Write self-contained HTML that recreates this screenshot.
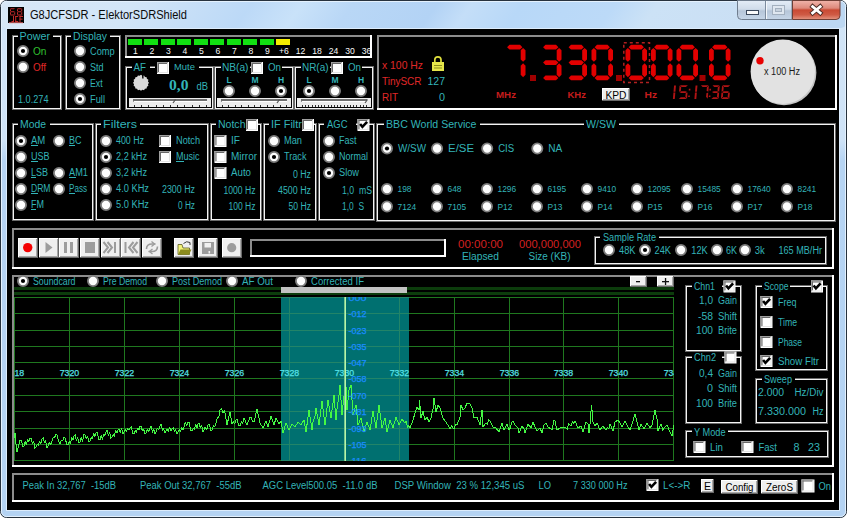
<!DOCTYPE html><html><head><meta charset="utf-8"><style>html,body{margin:0;padding:0;width:847px;height:518px;overflow:hidden;background:#fff}svg{display:block}text{font-family:"Liberation Sans",sans-serif}</style></head><body><svg width="847" height="518" viewBox="0 0 847 518" font-family="Liberation Sans">
<defs>
<linearGradient id="tb" x1="0" y1="0" x2="847" y2="0" gradientUnits="userSpaceOnUse" gradientTransform="skewX(-35)">
<stop offset="0" stop-color="#d8e8f7"/><stop offset="0.16" stop-color="#d2e5f7"/><stop offset="0.3" stop-color="#bcd9f7"/>
<stop offset="0.36" stop-color="#c9e2f9"/><stop offset="0.42" stop-color="#b9d7f6"/><stop offset="0.52" stop-color="#b3d3f5"/>
<stop offset="0.56" stop-color="#c4def8"/><stop offset="0.62" stop-color="#b8d8f8"/><stop offset="0.73" stop-color="#bcdaf8"/><stop offset="0.78" stop-color="#cce2f6"/><stop offset="0.9" stop-color="#cadff4"/><stop offset="1" stop-color="#bcd7f2"/></linearGradient>
<linearGradient id="cb" x1="0" y1="0" x2="0" y2="1"><stop offset="0" stop-color="#f0b4aa"/><stop offset="0.4" stop-color="#de8a7c"/><stop offset="0.5" stop-color="#c94a34"/><stop offset="0.75" stop-color="#cf5a44"/><stop offset="1" stop-color="#e49682"/></linearGradient>
<linearGradient id="mb" x1="0" y1="0" x2="0" y2="1"><stop offset="0" stop-color="#e4edf7"/><stop offset="0.45" stop-color="#d0dcea"/><stop offset="0.55" stop-color="#b6c6d9"/><stop offset="1" stop-color="#c6d6e8"/></linearGradient>
<linearGradient id="fr" x1="0" y1="0" x2="0" y2="518" gradientUnits="userSpaceOnUse"><stop offset="0" stop-color="#d2e5f7"/><stop offset="0.27" stop-color="#cfe3f7"/><stop offset="0.31" stop-color="#b6d4f3"/><stop offset="1" stop-color="#b4d3f3"/></linearGradient>
<clipPath id="gclip"><rect x="14" y="297" width="660" height="164"/></clipPath>
</defs>
<rect x="0.5" y="0.5" width="846" height="517" rx="6" ry="6" fill="url(#fr)" stroke="#27323e" stroke-width="1"/>
<rect x="1" y="1" width="845" height="27" rx="5" ry="5" fill="url(#tb)"/>
<rect x="1.5" y="1.5" width="844" height="515" rx="5" ry="5" fill="none" stroke="#e4f1fd" stroke-width="1"/>
<rect x="6" y="28" width="834" height="483" fill="#dcecfc" />
<rect x="7" y="29" width="832" height="481" fill="#000" />
<rect x="8" y="7" width="16" height="16" fill="#000" />
<polygon points="10.25,8.20 14.95,8.20 13.95,9.20 11.25,9.20" fill="#c42a2a"/>
<polygon points="10.00,8.45 11.00,9.45 11.00,11.05 10.00,11.55" fill="#c42a2a"/>
<polygon points="10.25,11.80 11.25,11.30 13.95,11.30 14.95,11.80 13.95,12.30 11.25,12.30" fill="#c42a2a"/>
<polygon points="10.00,12.05 11.00,12.55 11.00,14.15 10.00,15.15" fill="#c42a2a"/>
<polygon points="10.25,15.40 14.95,15.40 13.95,14.40 11.25,14.40" fill="#c42a2a"/>
<polygon points="15.20,12.05 14.20,12.55 14.20,14.15 15.20,15.15" fill="#c42a2a"/>
<polygon points="17.25,8.20 21.95,8.20 20.95,9.20 18.25,9.20" fill="#c42a2a"/>
<polygon points="22.20,8.45 21.20,9.45 21.20,11.05 22.20,11.55" fill="#c42a2a"/>
<polygon points="22.20,12.05 21.20,12.55 21.20,14.15 22.20,15.15" fill="#c42a2a"/>
<polygon points="17.25,15.40 21.95,15.40 20.95,14.40 18.25,14.40" fill="#c42a2a"/>
<polygon points="17.00,12.05 18.00,12.55 18.00,14.15 17.00,15.15" fill="#c42a2a"/>
<polygon points="17.00,8.45 18.00,9.45 18.00,11.05 17.00,11.55" fill="#c42a2a"/>
<polygon points="17.25,11.80 18.25,11.30 20.95,11.30 21.95,11.80 20.95,12.30 18.25,12.30" fill="#c42a2a"/>
<rect x="13" y="16" width="1" height="6" fill="#c42a2a" />
<rect x="11.5" y="21" width="1.5" height="1" fill="#c42a2a" />
<rect x="15.2" y="16" width="3" height="1" fill="#c42a2a" />
<rect x="15.2" y="16" width="1" height="6" fill="#c42a2a" />
<rect x="15.2" y="21" width="3" height="1" fill="#c42a2a" />
<rect x="19.5" y="16" width="3.5" height="1" fill="#c42a2a" />
<rect x="19.5" y="16" width="1" height="6" fill="#c42a2a" />
<rect x="19.5" y="18.6" width="3" height="1" fill="#c42a2a" />
<rect x="9" y="22.3" width="14" height="0.9" fill="#e86a6a" />
<text x="30" y="19" font-size="12" fill="#0a0a0a" text-anchor="start" textLength="157.00" lengthAdjust="spacingAndGlyphs" xml:space="preserve" >G8JCFSDR - ElektorSDRShield</text>
<path d="M737.5 0.5 L737.5 15.5 Q737.5 19.5 741.5 19.5 L792 19.5 L792 0.5 Z" fill="url(#mb)" stroke="#6f7d8e" stroke-width="1"/>
<rect x="765" y="1" width="1" height="18" fill="#7d8c9e" />
<rect x="766" y="1" width="1" height="18" fill="#f4f8fc" />
<path d="M792.5 0.5 L792.5 19.5 L836 19.5 Q840 19.5 840 15.5 L840 0.5 Z" fill="url(#cb)" stroke="#6e3f36" stroke-width="1"/>
<rect x="746" y="10" width="13" height="5" fill="#3a475a" />
<rect x="747" y="11" width="11" height="3" fill="#fafafa" />
<rect x="772" y="5" width="13" height="10" fill="#a3b0bf" />
<rect x="773" y="6" width="11" height="8" fill="#dfe7f0" />
<rect x="775" y="8" width="7" height="4" fill="#a3b0bf" />
<rect x="776" y="9" width="5" height="2" fill="#c7d2de" />
<path d="M812.6 6.6 L820.2 13 M820.2 6.6 L812.6 13" stroke="#4a2a24" stroke-width="4.6" stroke-linecap="square"/>
<path d="M812.6 6.6 L820.2 13 M820.2 6.6 L812.6 13" stroke="#ffffff" stroke-width="2.8" stroke-linecap="square"/>
<rect x="12" y="35" width="6" height="1" fill="#6a6a6a" />
<rect x="53" y="35" width="9" height="1" fill="#6a6a6a" />
<rect x="12" y="35" width="1" height="75" fill="#6a6a6a" />
<rect x="61" y="35" width="1" height="75" fill="#6a6a6a" />
<rect x="12" y="109" width="50" height="1" fill="#6a6a6a" />
<rect x="13" y="36" width="5" height="1" fill="#f4f4f4" />
<rect x="53" y="36" width="8" height="1" fill="#f4f4f4" />
<rect x="13" y="36" width="1" height="73" fill="#f4f4f4" />
<rect x="60" y="36" width="1" height="73" fill="#f4f4f4" />
<rect x="13" y="108" width="48" height="1" fill="#f4f4f4" />
<text x="19.5" y="40" font-size="11" fill="#33b4b8" text-anchor="start" textLength="30.50" lengthAdjust="spacingAndGlyphs" xml:space="preserve" >Power</text>
<circle cx="23" cy="51" r="5.1" fill="#fdfdfd" stroke="#7c7c7c" stroke-width="1.8"/>
<circle cx="23" cy="51" r="2.1" fill="#000"/>
<text x="33" y="55" font-size="10" fill="#30c030" text-anchor="start" textLength="13.50" lengthAdjust="spacingAndGlyphs" xml:space="preserve" >On</text>
<circle cx="23" cy="67" r="5.1" fill="#fdfdfd" stroke="#7c7c7c" stroke-width="1.8"/>
<text x="33" y="71" font-size="10" fill="#e02828" text-anchor="start" textLength="13.00" lengthAdjust="spacingAndGlyphs" xml:space="preserve" >Off</text>
<text x="18" y="103" font-size="10" fill="#33b4b8" text-anchor="start" textLength="30.50" lengthAdjust="spacingAndGlyphs" xml:space="preserve" >1.0.274</text>
<rect x="65" y="35" width="6" height="1" fill="#6a6a6a" />
<rect x="110" y="35" width="11" height="1" fill="#6a6a6a" />
<rect x="65" y="35" width="1" height="75" fill="#6a6a6a" />
<rect x="120" y="35" width="1" height="75" fill="#6a6a6a" />
<rect x="65" y="109" width="56" height="1" fill="#6a6a6a" />
<rect x="66" y="36" width="5" height="1" fill="#f4f4f4" />
<rect x="110" y="36" width="10" height="1" fill="#f4f4f4" />
<rect x="66" y="36" width="1" height="73" fill="#f4f4f4" />
<rect x="119" y="36" width="1" height="73" fill="#f4f4f4" />
<rect x="66" y="108" width="54" height="1" fill="#f4f4f4" />
<text x="73" y="40" font-size="11" fill="#33b4b8" text-anchor="start" textLength="34.00" lengthAdjust="spacingAndGlyphs" xml:space="preserve" >Display</text>
<circle cx="80" cy="51" r="5.1" fill="#fdfdfd" stroke="#7c7c7c" stroke-width="1.8"/>
<text x="90" y="55" font-size="10" fill="#33b4b8" text-anchor="start" textLength="24.70" lengthAdjust="spacingAndGlyphs" xml:space="preserve" >Comp</text>
<circle cx="80" cy="67" r="5.1" fill="#fdfdfd" stroke="#7c7c7c" stroke-width="1.8"/>
<text x="90" y="71" font-size="10" fill="#33b4b8" text-anchor="start" textLength="13.60" lengthAdjust="spacingAndGlyphs" xml:space="preserve" >Std</text>
<circle cx="80" cy="83" r="5.1" fill="#fdfdfd" stroke="#7c7c7c" stroke-width="1.8"/>
<text x="90" y="87" font-size="10" fill="#33b4b8" text-anchor="start" textLength="12.60" lengthAdjust="spacingAndGlyphs" xml:space="preserve" >Ext</text>
<circle cx="80" cy="99" r="5.1" fill="#fdfdfd" stroke="#7c7c7c" stroke-width="1.8"/>
<circle cx="80" cy="99" r="2.1" fill="#000"/>
<text x="90" y="103" font-size="10" fill="#33b4b8" text-anchor="start" textLength="15.00" lengthAdjust="spacingAndGlyphs" xml:space="preserve" >Full</text>
<rect x="125" y="35" width="247" height="2" fill="#8c8c8c" />
<rect x="125" y="35" width="2" height="23" fill="#8c8c8c" />
<rect x="125" y="56" width="247" height="2" fill="#ffffff" />
<rect x="370" y="35" width="2" height="23" fill="#ffffff" />
<rect x="128" y="39" width="14" height="6" fill="#12e012" />
<rect x="144" y="39" width="14" height="6" fill="#12e012" />
<rect x="161" y="39" width="14" height="6" fill="#12e012" />
<rect x="177" y="39" width="14" height="6" fill="#12e012" />
<rect x="194" y="39" width="14" height="6" fill="#12e012" />
<rect x="210" y="39" width="14" height="6" fill="#12e012" />
<rect x="227" y="39" width="14" height="6" fill="#12e012" />
<rect x="243" y="39" width="14" height="6" fill="#12e012" />
<rect x="260" y="39" width="14" height="6" fill="#12e012" />
<rect x="276" y="39" width="14" height="6" fill="#f4ec00" />
<text x="135.5" y="54" font-size="9.8" fill="#f8f8f8" text-anchor="middle" textLength="4.80" lengthAdjust="spacingAndGlyphs" xml:space="preserve" >1</text>
<text x="152.0" y="54" font-size="9.8" fill="#f8f8f8" text-anchor="middle" textLength="4.80" lengthAdjust="spacingAndGlyphs" xml:space="preserve" >2</text>
<text x="168.5" y="54" font-size="9.8" fill="#f8f8f8" text-anchor="middle" textLength="4.80" lengthAdjust="spacingAndGlyphs" xml:space="preserve" >3</text>
<text x="185.0" y="54" font-size="9.8" fill="#f8f8f8" text-anchor="middle" textLength="4.80" lengthAdjust="spacingAndGlyphs" xml:space="preserve" >4</text>
<text x="201.5" y="54" font-size="9.8" fill="#f8f8f8" text-anchor="middle" textLength="4.80" lengthAdjust="spacingAndGlyphs" xml:space="preserve" >5</text>
<text x="218.0" y="54" font-size="9.8" fill="#f8f8f8" text-anchor="middle" textLength="4.80" lengthAdjust="spacingAndGlyphs" xml:space="preserve" >6</text>
<text x="234.5" y="54" font-size="9.8" fill="#f8f8f8" text-anchor="middle" textLength="4.80" lengthAdjust="spacingAndGlyphs" xml:space="preserve" >7</text>
<text x="251.0" y="54" font-size="9.8" fill="#f8f8f8" text-anchor="middle" textLength="4.80" lengthAdjust="spacingAndGlyphs" xml:space="preserve" >8</text>
<text x="267.5" y="54" font-size="9.8" fill="#f8f8f8" text-anchor="middle" textLength="4.80" lengthAdjust="spacingAndGlyphs" xml:space="preserve" >9</text>
<text x="284.0" y="54" font-size="9.8" fill="#f8f8f8" text-anchor="middle" textLength="9.83" lengthAdjust="spacingAndGlyphs" xml:space="preserve" >+6</text>
<text x="300.5" y="54" font-size="9.8" fill="#f8f8f8" text-anchor="middle" textLength="9.59" lengthAdjust="spacingAndGlyphs" xml:space="preserve" >12</text>
<text x="317.0" y="54" font-size="9.8" fill="#f8f8f8" text-anchor="middle" textLength="9.59" lengthAdjust="spacingAndGlyphs" xml:space="preserve" >18</text>
<text x="333.5" y="54" font-size="9.8" fill="#f8f8f8" text-anchor="middle" textLength="9.59" lengthAdjust="spacingAndGlyphs" xml:space="preserve" >24</text>
<text x="350.0" y="54" font-size="9.8" fill="#f8f8f8" text-anchor="middle" textLength="9.59" lengthAdjust="spacingAndGlyphs" xml:space="preserve" >30</text>
<text x="366.5" y="54" font-size="9.8" fill="#f8f8f8" text-anchor="middle" textLength="9.59" lengthAdjust="spacingAndGlyphs" xml:space="preserve" >36</text>
<rect x="125" y="66" width="7" height="1" fill="#6a6a6a" />
<rect x="150" y="66" width="5" height="1" fill="#6a6a6a" />
<rect x="199" y="66" width="15" height="1" fill="#6a6a6a" />
<rect x="125" y="66" width="1" height="44" fill="#6a6a6a" />
<rect x="213" y="66" width="1" height="44" fill="#6a6a6a" />
<rect x="125" y="109" width="89" height="1" fill="#6a6a6a" />
<rect x="126" y="67" width="6" height="1" fill="#f4f4f4" />
<rect x="150" y="67" width="5" height="1" fill="#f4f4f4" />
<rect x="199" y="67" width="14" height="1" fill="#f4f4f4" />
<rect x="126" y="67" width="1" height="42" fill="#f4f4f4" />
<rect x="212" y="67" width="1" height="42" fill="#f4f4f4" />
<rect x="126" y="108" width="87" height="1" fill="#f4f4f4" />
<text x="133.5" y="70.5" font-size="11" fill="#33b4b8" text-anchor="start" textLength="12.50" lengthAdjust="spacingAndGlyphs" xml:space="preserve" >AF</text>
<rect x="157" y="62" width="12" height="12" fill="#ffffff" />
<rect x="157" y="62" width="11" height="1" fill="#a0a0a0" />
<rect x="157" y="62" width="1" height="11" fill="#a0a0a0" />
<rect x="158" y="63" width="9" height="1" fill="#696969" />
<rect x="158" y="63" width="1" height="9" fill="#696969" />
<rect x="158" y="72" width="10" height="1" fill="#e3e3e3" />
<rect x="167" y="63" width="1" height="10" fill="#e3e3e3" />
<text x="174" y="70.3" font-size="9.5" fill="#33b4b8" text-anchor="start" textLength="21.00" lengthAdjust="spacingAndGlyphs" xml:space="preserve" >Mute</text>
<polygon points="149.00,82.80 147.96,84.19 148.39,85.86 146.90,86.74 146.66,88.46 144.94,88.70 144.06,90.19 142.39,89.76 141.00,90.80 139.61,89.76 137.94,90.19 137.06,88.70 135.34,88.46 135.10,86.74 133.61,85.86 134.04,84.19 133.00,82.80 134.04,81.41 133.61,79.74 135.10,78.86 135.34,77.14 137.06,76.90 137.94,75.41 139.61,75.84 141.00,74.80 142.39,75.84 144.06,75.41 144.94,76.90 146.66,77.14 146.90,78.86 148.39,79.74 147.96,81.41" fill="#d9d9d9"/>
<path d="M142 74.5 L142.2 78.5 L143.6 78.5 L143.4 74.5 Z" fill="#000"/>
<text x="169" y="90" font-size="14" fill="#33b4b8" text-anchor="start" font-weight="bold" style="font-family:&quot;Liberation Serif&quot;" textLength="19.50" lengthAdjust="spacingAndGlyphs" xml:space="preserve" >0,0</text>
<text x="196.5" y="89.8" font-size="11.5" fill="#33b4b8" text-anchor="start" textLength="11.50" lengthAdjust="spacingAndGlyphs" xml:space="preserve" >dB</text>
<rect x="129" y="98" width="82" height="9" fill="#ececec" />
<rect x="133" y="99" width="74" height="2" fill="#6e6e6e" />
<rect x="134" y="101" width="73" height="1" fill="#ffffff" />
<rect x="133" y="101" width="1" height="1" fill="#9a9a9a" />
<rect x="134" y="105" width="1" height="2" fill="#303030" />
<rect x="141" y="105" width="1" height="2" fill="#303030" />
<rect x="148" y="105" width="1" height="2" fill="#303030" />
<rect x="156" y="105" width="1" height="2" fill="#303030" />
<rect x="163" y="105" width="1" height="2" fill="#303030" />
<rect x="170" y="105" width="1" height="2" fill="#303030" />
<rect x="177" y="105" width="1" height="2" fill="#303030" />
<rect x="184" y="105" width="1" height="2" fill="#303030" />
<rect x="192" y="105" width="1" height="2" fill="#303030" />
<rect x="199" y="105" width="1" height="2" fill="#303030" />
<rect x="206" y="105" width="1" height="2" fill="#303030" />
<path d="M173 103 L175.5 99.5" stroke="#505050" stroke-width="1.2"/>
<rect x="214" y="66" width="7" height="1" fill="#6a6a6a" />
<rect x="250" y="66" width="1" height="1" fill="#6a6a6a" />
<rect x="282" y="66" width="12" height="1" fill="#6a6a6a" />
<rect x="214" y="66" width="1" height="44" fill="#6a6a6a" />
<rect x="293" y="66" width="1" height="44" fill="#6a6a6a" />
<rect x="214" y="109" width="80" height="1" fill="#6a6a6a" />
<rect x="215" y="67" width="6" height="1" fill="#f4f4f4" />
<rect x="250" y="67" width="1" height="1" fill="#f4f4f4" />
<rect x="282" y="67" width="11" height="1" fill="#f4f4f4" />
<rect x="215" y="67" width="1" height="42" fill="#f4f4f4" />
<rect x="292" y="67" width="1" height="42" fill="#f4f4f4" />
<rect x="215" y="108" width="78" height="1" fill="#f4f4f4" />
<text x="222" y="70.5" font-size="11" fill="#33b4b8" text-anchor="start" textLength="26.50" lengthAdjust="spacingAndGlyphs" xml:space="preserve" >NB(a)</text>
<rect x="251" y="62" width="12" height="12" fill="#ffffff" />
<rect x="251" y="62" width="11" height="1" fill="#a0a0a0" />
<rect x="251" y="62" width="1" height="11" fill="#a0a0a0" />
<rect x="252" y="63" width="9" height="1" fill="#696969" />
<rect x="252" y="63" width="1" height="9" fill="#696969" />
<rect x="252" y="72" width="10" height="1" fill="#e3e3e3" />
<rect x="261" y="63" width="1" height="10" fill="#e3e3e3" />
<text x="268" y="70.5" font-size="10.5" fill="#33b4b8" text-anchor="start" textLength="13.00" lengthAdjust="spacingAndGlyphs" xml:space="preserve" >On</text>
<text x="229" y="83" font-size="9.5" fill="#33b4b8" text-anchor="middle" font-weight="bold" textLength="5.22" lengthAdjust="spacingAndGlyphs" xml:space="preserve" >L</text>
<circle cx="229" cy="91" r="5.1" fill="#fdfdfd" stroke="#7c7c7c" stroke-width="1.8"/>
<text x="255" y="83" font-size="9.5" fill="#33b4b8" text-anchor="middle" font-weight="bold" textLength="7.12" lengthAdjust="spacingAndGlyphs" xml:space="preserve" >M</text>
<circle cx="255" cy="91" r="5.1" fill="#fdfdfd" stroke="#7c7c7c" stroke-width="1.8"/>
<text x="281" y="83" font-size="9.5" fill="#33b4b8" text-anchor="middle" font-weight="bold" textLength="6.17" lengthAdjust="spacingAndGlyphs" xml:space="preserve" >H</text>
<circle cx="281" cy="91" r="5.1" fill="#fdfdfd" stroke="#7c7c7c" stroke-width="1.8"/>
<circle cx="281" cy="91" r="2.1" fill="#000"/>
<rect x="217" y="98" width="74" height="9" fill="#ececec" />
<rect x="221" y="99" width="66" height="2" fill="#6e6e6e" />
<rect x="222" y="101" width="65" height="1" fill="#ffffff" />
<rect x="221" y="101" width="1" height="1" fill="#9a9a9a" />
<rect x="222" y="105" width="1" height="2" fill="#303030" />
<rect x="228" y="105" width="1" height="2" fill="#303030" />
<rect x="235" y="105" width="1" height="2" fill="#303030" />
<rect x="241" y="105" width="1" height="2" fill="#303030" />
<rect x="248" y="105" width="1" height="2" fill="#303030" />
<rect x="254" y="105" width="1" height="2" fill="#303030" />
<rect x="260" y="105" width="1" height="2" fill="#303030" />
<rect x="267" y="105" width="1" height="2" fill="#303030" />
<rect x="273" y="105" width="1" height="2" fill="#303030" />
<rect x="280" y="105" width="1" height="2" fill="#303030" />
<rect x="286" y="105" width="1" height="2" fill="#303030" />
<path d="M277 103 L279.5 99.5" stroke="#505050" stroke-width="1.2"/>
<rect x="294" y="66" width="7" height="1" fill="#6a6a6a" />
<rect x="330" y="66" width="1" height="1" fill="#6a6a6a" />
<rect x="362" y="66" width="12" height="1" fill="#6a6a6a" />
<rect x="294" y="66" width="1" height="44" fill="#6a6a6a" />
<rect x="373" y="66" width="1" height="44" fill="#6a6a6a" />
<rect x="294" y="109" width="80" height="1" fill="#6a6a6a" />
<rect x="295" y="67" width="6" height="1" fill="#f4f4f4" />
<rect x="330" y="67" width="1" height="1" fill="#f4f4f4" />
<rect x="362" y="67" width="11" height="1" fill="#f4f4f4" />
<rect x="295" y="67" width="1" height="42" fill="#f4f4f4" />
<rect x="372" y="67" width="1" height="42" fill="#f4f4f4" />
<rect x="295" y="108" width="78" height="1" fill="#f4f4f4" />
<text x="302" y="70.5" font-size="11" fill="#33b4b8" text-anchor="start" textLength="26.50" lengthAdjust="spacingAndGlyphs" xml:space="preserve" >NR(a)</text>
<rect x="331" y="62" width="12" height="12" fill="#ffffff" />
<rect x="331" y="62" width="11" height="1" fill="#a0a0a0" />
<rect x="331" y="62" width="1" height="11" fill="#a0a0a0" />
<rect x="332" y="63" width="9" height="1" fill="#696969" />
<rect x="332" y="63" width="1" height="9" fill="#696969" />
<rect x="332" y="72" width="10" height="1" fill="#e3e3e3" />
<rect x="341" y="63" width="1" height="10" fill="#e3e3e3" />
<text x="348" y="70.5" font-size="10.5" fill="#33b4b8" text-anchor="start" textLength="13.00" lengthAdjust="spacingAndGlyphs" xml:space="preserve" >On</text>
<text x="309" y="83" font-size="9.5" fill="#33b4b8" text-anchor="middle" font-weight="bold" textLength="5.22" lengthAdjust="spacingAndGlyphs" xml:space="preserve" >L</text>
<circle cx="309" cy="91" r="5.1" fill="#fdfdfd" stroke="#7c7c7c" stroke-width="1.8"/>
<circle cx="309" cy="91" r="2.1" fill="#000"/>
<text x="335" y="83" font-size="9.5" fill="#33b4b8" text-anchor="middle" font-weight="bold" textLength="7.12" lengthAdjust="spacingAndGlyphs" xml:space="preserve" >M</text>
<circle cx="335" cy="91" r="5.1" fill="#fdfdfd" stroke="#7c7c7c" stroke-width="1.8"/>
<text x="361" y="83" font-size="9.5" fill="#33b4b8" text-anchor="middle" font-weight="bold" textLength="6.17" lengthAdjust="spacingAndGlyphs" xml:space="preserve" >H</text>
<circle cx="361" cy="91" r="5.1" fill="#fdfdfd" stroke="#7c7c7c" stroke-width="1.8"/>
<rect x="297" y="98" width="74" height="9" fill="#ececec" />
<rect x="301" y="99" width="66" height="2" fill="#6e6e6e" />
<rect x="302" y="101" width="65" height="1" fill="#ffffff" />
<rect x="301" y="101" width="1" height="1" fill="#9a9a9a" />
<rect x="302" y="105" width="1" height="2" fill="#303030" />
<rect x="305" y="105" width="1" height="2" fill="#303030" />
<rect x="308" y="105" width="1" height="2" fill="#303030" />
<rect x="312" y="105" width="1" height="2" fill="#303030" />
<rect x="315" y="105" width="1" height="2" fill="#303030" />
<rect x="318" y="105" width="1" height="2" fill="#303030" />
<rect x="321" y="105" width="1" height="2" fill="#303030" />
<rect x="324" y="105" width="1" height="2" fill="#303030" />
<rect x="328" y="105" width="1" height="2" fill="#303030" />
<rect x="331" y="105" width="1" height="2" fill="#303030" />
<rect x="334" y="105" width="1" height="2" fill="#303030" />
<rect x="337" y="105" width="1" height="2" fill="#303030" />
<rect x="340" y="105" width="1" height="2" fill="#303030" />
<rect x="344" y="105" width="1" height="2" fill="#303030" />
<rect x="347" y="105" width="1" height="2" fill="#303030" />
<rect x="350" y="105" width="1" height="2" fill="#303030" />
<rect x="353" y="105" width="1" height="2" fill="#303030" />
<rect x="356" y="105" width="1" height="2" fill="#303030" />
<rect x="360" y="105" width="1" height="2" fill="#303030" />
<rect x="363" y="105" width="1" height="2" fill="#303030" />
<rect x="366" y="105" width="1" height="2" fill="#303030" />
<path d="M365 103 L367.5 99.5" stroke="#505050" stroke-width="1.2"/>
<rect x="377" y="35" width="460" height="2" fill="#8c8c8c" />
<rect x="377" y="35" width="2" height="75" fill="#8c8c8c" />
<rect x="377" y="108" width="460" height="2" fill="#ffffff" />
<rect x="835" y="35" width="2" height="75" fill="#ffffff" />
<text x="382" y="69" font-size="11" fill="#e02828" text-anchor="start" textLength="41.00" lengthAdjust="spacingAndGlyphs" xml:space="preserve" >x 100 Hz</text>
<path d="M434.8 63 L434.8 59.8 Q434.8 56.8 437.9 56.8 Q441 56.8 441 59.8 L441 63" stroke="#dede3c" stroke-width="1.7" fill="none"/>
<rect x="432" y="62" width="12" height="9" fill="#e6e64a" />
<rect x="434" y="65" width="8" height="1" fill="#8c8c1c" />
<rect x="434" y="67.5" width="8" height="1" fill="#8c8c1c" />
<text x="382" y="85" font-size="11" fill="#e02828" text-anchor="start" textLength="39.50" lengthAdjust="spacingAndGlyphs" xml:space="preserve" >TinySCR</text>
<text x="445" y="85" font-size="11" fill="#33b4b8" text-anchor="end" textLength="17.50" lengthAdjust="spacingAndGlyphs" xml:space="preserve" >127</text>
<text x="382" y="101" font-size="11" fill="#e02828" text-anchor="start" textLength="16.00" lengthAdjust="spacingAndGlyphs" xml:space="preserve" >RIT</text>
<text x="445" y="101" font-size="11" fill="#33b4b8" text-anchor="end" textLength="6.00" lengthAdjust="spacingAndGlyphs" xml:space="preserve" >0</text>
<polygon points="507.10,47.20 509.50,44.80 520.00,44.80 522.40,47.20 520.00,49.60 509.50,49.60" fill="#e20000"/>
<polygon points="523.10,47.90 525.50,50.30 525.50,59.45 523.10,61.85 520.70,59.45 520.70,50.30" fill="#e20000"/>
<polygon points="523.10,63.25 525.50,65.65 525.50,74.80 523.10,77.20 520.70,74.80 520.70,65.65" fill="#e20000"/>
<polygon points="543.10,47.20 545.50,44.80 556.00,44.80 558.40,47.20 556.00,49.60 545.50,49.60" fill="#e20000"/>
<polygon points="559.10,47.90 561.50,50.30 561.50,59.45 559.10,61.85 556.70,59.45 556.70,50.30" fill="#e20000"/>
<polygon points="543.10,62.55 545.50,60.15 556.00,60.15 558.40,62.55 556.00,64.95 545.50,64.95" fill="#e20000"/>
<polygon points="559.10,63.25 561.50,65.65 561.50,74.80 559.10,77.20 556.70,74.80 556.70,65.65" fill="#e20000"/>
<polygon points="543.10,77.90 545.50,75.50 556.00,75.50 558.40,77.90 556.00,80.30 545.50,80.30" fill="#e20000"/>
<polygon points="568.60,47.20 571.00,44.80 581.50,44.80 583.90,47.20 581.50,49.60 571.00,49.60" fill="#e20000"/>
<polygon points="584.60,47.90 587.00,50.30 587.00,59.45 584.60,61.85 582.20,59.45 582.20,50.30" fill="#e20000"/>
<polygon points="568.60,62.55 571.00,60.15 581.50,60.15 583.90,62.55 581.50,64.95 571.00,64.95" fill="#e20000"/>
<polygon points="584.60,63.25 587.00,65.65 587.00,74.80 584.60,77.20 582.20,74.80 582.20,65.65" fill="#e20000"/>
<polygon points="568.60,77.90 571.00,75.50 581.50,75.50 583.90,77.90 581.50,80.30 571.00,80.30" fill="#e20000"/>
<polygon points="594.60,47.20 597.00,44.80 607.50,44.80 609.90,47.20 607.50,49.60 597.00,49.60" fill="#e20000"/>
<polygon points="610.60,47.90 613.00,50.30 613.00,59.45 610.60,61.85 608.20,59.45 608.20,50.30" fill="#e20000"/>
<polygon points="610.60,63.25 613.00,65.65 613.00,74.80 610.60,77.20 608.20,74.80 608.20,65.65" fill="#e20000"/>
<polygon points="594.60,77.90 597.00,75.50 607.50,75.50 609.90,77.90 607.50,80.30 597.00,80.30" fill="#e20000"/>
<polygon points="593.90,63.25 596.30,65.65 596.30,74.80 593.90,77.20 591.50,74.80 591.50,65.65" fill="#e20000"/>
<polygon points="593.90,47.90 596.30,50.30 596.30,59.45 593.90,61.85 591.50,59.45 591.50,50.30" fill="#e20000"/>
<polygon points="628.60,47.20 631.00,44.80 641.50,44.80 643.90,47.20 641.50,49.60 631.00,49.60" fill="#e20000"/>
<polygon points="644.60,47.90 647.00,50.30 647.00,59.45 644.60,61.85 642.20,59.45 642.20,50.30" fill="#e20000"/>
<polygon points="644.60,63.25 647.00,65.65 647.00,74.80 644.60,77.20 642.20,74.80 642.20,65.65" fill="#e20000"/>
<polygon points="628.60,77.90 631.00,75.50 641.50,75.50 643.90,77.90 641.50,80.30 631.00,80.30" fill="#e20000"/>
<polygon points="627.90,63.25 630.30,65.65 630.30,74.80 627.90,77.20 625.50,74.80 625.50,65.65" fill="#e20000"/>
<polygon points="627.90,47.90 630.30,50.30 630.30,59.45 627.90,61.85 625.50,59.45 625.50,50.30" fill="#e20000"/>
<polygon points="654.10,47.20 656.50,44.80 667.00,44.80 669.40,47.20 667.00,49.60 656.50,49.60" fill="#e20000"/>
<polygon points="670.10,47.90 672.50,50.30 672.50,59.45 670.10,61.85 667.70,59.45 667.70,50.30" fill="#e20000"/>
<polygon points="670.10,63.25 672.50,65.65 672.50,74.80 670.10,77.20 667.70,74.80 667.70,65.65" fill="#e20000"/>
<polygon points="654.10,77.90 656.50,75.50 667.00,75.50 669.40,77.90 667.00,80.30 656.50,80.30" fill="#e20000"/>
<polygon points="653.40,63.25 655.80,65.65 655.80,74.80 653.40,77.20 651.00,74.80 651.00,65.65" fill="#e20000"/>
<polygon points="653.40,47.90 655.80,50.30 655.80,59.45 653.40,61.85 651.00,59.45 651.00,50.30" fill="#e20000"/>
<polygon points="679.60,47.20 682.00,44.80 692.50,44.80 694.90,47.20 692.50,49.60 682.00,49.60" fill="#e20000"/>
<polygon points="695.60,47.90 698.00,50.30 698.00,59.45 695.60,61.85 693.20,59.45 693.20,50.30" fill="#e20000"/>
<polygon points="695.60,63.25 698.00,65.65 698.00,74.80 695.60,77.20 693.20,74.80 693.20,65.65" fill="#e20000"/>
<polygon points="679.60,77.90 682.00,75.50 692.50,75.50 694.90,77.90 692.50,80.30 682.00,80.30" fill="#e20000"/>
<polygon points="678.90,63.25 681.30,65.65 681.30,74.80 678.90,77.20 676.50,74.80 676.50,65.65" fill="#e20000"/>
<polygon points="678.90,47.90 681.30,50.30 681.30,59.45 678.90,61.85 676.50,59.45 676.50,50.30" fill="#e20000"/>
<polygon points="712.10,47.20 714.50,44.80 725.00,44.80 727.40,47.20 725.00,49.60 714.50,49.60" fill="#e20000"/>
<polygon points="728.10,47.90 730.50,50.30 730.50,59.45 728.10,61.85 725.70,59.45 725.70,50.30" fill="#e20000"/>
<polygon points="728.10,63.25 730.50,65.65 730.50,74.80 728.10,77.20 725.70,74.80 725.70,65.65" fill="#e20000"/>
<polygon points="712.10,77.90 714.50,75.50 725.00,75.50 727.40,77.90 725.00,80.30 714.50,80.30" fill="#e20000"/>
<polygon points="711.40,63.25 713.80,65.65 713.80,74.80 711.40,77.20 709.00,74.80 709.00,65.65" fill="#e20000"/>
<polygon points="711.40,47.90 713.80,50.30 713.80,59.45 711.40,61.85 709.00,59.45 709.00,50.30" fill="#e20000"/>
<rect x="530" y="75" width="6" height="6" fill="#a00000" />
<rect x="616" y="75" width="6" height="6" fill="#a00000" />
<rect x="699.5" y="75" width="6" height="6" fill="#a00000" />
<rect x="623.8" y="42.8" width="25.7" height="39.8" fill="none" stroke="#b02020" stroke-width="1.5" stroke-dasharray="3,3"/>
<text x="496" y="97.8" font-size="9.5" fill="#c41c1c" text-anchor="start" font-weight="bold" textLength="20.00" lengthAdjust="spacingAndGlyphs" xml:space="preserve" >MHz</text>
<text x="567.5" y="97.8" font-size="9.5" fill="#c41c1c" text-anchor="start" font-weight="bold" textLength="18.50" lengthAdjust="spacingAndGlyphs" xml:space="preserve" >KHz</text>
<text x="644.5" y="97.8" font-size="9.5" fill="#c41c1c" text-anchor="start" font-weight="bold" textLength="12.50" lengthAdjust="spacingAndGlyphs" xml:space="preserve" >Hz</text>
<rect x="602" y="88" width="28" height="13" fill="#6a6a6a" />
<rect x="602" y="88" width="27" height="12" fill="#ffffff" />
<rect x="603" y="89" width="26" height="11" fill="#a8a8a8" />
<rect x="603" y="89" width="25" height="10" fill="#efefef" />
<text x="616" y="98.5" font-size="10" fill="#000" text-anchor="middle" textLength="21.00" lengthAdjust="spacingAndGlyphs" xml:space="preserve" >KPD</text>
<g transform="translate(0,92) skewX(-5) translate(0,-92)">
<rect x="673.5" y="85.5" width="1.9" height="6.3" fill="#b01414"/>
<rect x="673.5" y="92.6" width="1.9" height="6.3" fill="#b01414"/>
<rect x="695" y="85.5" width="1.9" height="6.3" fill="#b01414"/>
<rect x="695" y="92.6" width="1.9" height="6.3" fill="#b01414"/>
<polygon points="679.35,85.20 687.25,85.20 685.45,87.00 681.15,87.00" fill="#b01414"/>
<polygon points="679.00,85.55 680.80,87.35 680.80,90.85 679.00,91.75" fill="#b01414"/>
<polygon points="679.35,92.10 681.15,91.20 685.45,91.20 687.25,92.10 685.45,93.00 681.15,93.00" fill="#b01414"/>
<polygon points="687.60,92.45 685.80,93.35 685.80,96.85 687.60,98.65" fill="#b01414"/>
<polygon points="679.35,99.00 687.25,99.00 685.45,97.20 681.15,97.20" fill="#b01414"/>
<polygon points="700.35,85.20 707.95,85.20 706.15,87.00 702.15,87.00" fill="#b01414"/>
<polygon points="708.30,85.55 706.50,87.35 706.50,90.85 708.30,91.75" fill="#b01414"/>
<polygon points="708.30,92.45 706.50,93.35 706.50,96.85 708.30,98.65" fill="#b01414"/>
<polygon points="711.95,85.20 718.85,85.20 717.05,87.00 713.75,87.00" fill="#b01414"/>
<polygon points="719.20,85.55 717.40,87.35 717.40,90.85 719.20,91.75" fill="#b01414"/>
<polygon points="711.95,92.10 713.75,91.20 717.05,91.20 718.85,92.10 717.05,93.00 713.75,93.00" fill="#b01414"/>
<polygon points="719.20,92.45 717.40,93.35 717.40,96.85 719.20,98.65" fill="#b01414"/>
<polygon points="711.95,99.00 718.85,99.00 717.05,97.20 713.75,97.20" fill="#b01414"/>
<polygon points="721.85,85.20 729.55,85.20 727.75,87.00 723.65,87.00" fill="#b01414"/>
<polygon points="721.50,85.55 723.30,87.35 723.30,90.85 721.50,91.75" fill="#b01414"/>
<polygon points="721.85,92.10 723.65,91.20 727.75,91.20 729.55,92.10 727.75,93.00 723.65,93.00" fill="#b01414"/>
<polygon points="721.50,92.45 723.30,93.35 723.30,96.85 721.50,98.65" fill="#b01414"/>
<polygon points="721.85,99.00 729.55,99.00 727.75,97.20 723.65,97.20" fill="#b01414"/>
<polygon points="729.90,92.45 728.10,93.35 728.10,96.85 729.90,98.65" fill="#b01414"/>
<rect x="688.6" y="88.8" width="1.6" height="1.6" fill="#b01414" />
<rect x="688.6" y="95.5" width="1.6" height="1.6" fill="#b01414" />
<rect x="709.2" y="88.8" width="1.6" height="1.6" fill="#b01414" />
<rect x="709.2" y="95.5" width="1.6" height="1.6" fill="#b01414" />
</g>
<circle cx="784" cy="72.8" r="32.4" fill="#c4c4c4"/>
<circle cx="782.8" cy="71.8" r="32.2" fill="#e2e2e2"/>
<circle cx="760" cy="60.7" r="3.7" fill="#e80000"/>
<text x="764" y="74.5" font-size="10" fill="#1a1a1a" text-anchor="start" textLength="36.00" lengthAdjust="spacingAndGlyphs" xml:space="preserve" >x 100 Hz</text>
<rect x="12" y="123" width="6" height="1" fill="#6a6a6a" />
<rect x="50" y="123" width="44" height="1" fill="#6a6a6a" />
<rect x="12" y="123" width="1" height="98" fill="#6a6a6a" />
<rect x="93" y="123" width="1" height="98" fill="#6a6a6a" />
<rect x="12" y="220" width="82" height="1" fill="#6a6a6a" />
<rect x="13" y="124" width="5" height="1" fill="#f4f4f4" />
<rect x="50" y="124" width="43" height="1" fill="#f4f4f4" />
<rect x="13" y="124" width="1" height="96" fill="#f4f4f4" />
<rect x="92" y="124" width="1" height="96" fill="#f4f4f4" />
<rect x="13" y="219" width="80" height="1" fill="#f4f4f4" />
<text x="20" y="128" font-size="11" fill="#33b4b8" text-anchor="start" textLength="26.00" lengthAdjust="spacingAndGlyphs" xml:space="preserve" >Mode</text>
<circle cx="21" cy="141" r="5.1" fill="#fdfdfd" stroke="#7c7c7c" stroke-width="1.8"/>
<circle cx="21" cy="141" r="2.1" fill="#000"/>
<text x="31" y="144" font-size="10" fill="#33b4b8" text-anchor="start" textLength="14.30" lengthAdjust="spacingAndGlyphs" xml:space="preserve" >AM</text>
<rect x="31" y="145" width="7" height="1" fill="#33b4b8" />
<circle cx="21" cy="157" r="5.1" fill="#fdfdfd" stroke="#7c7c7c" stroke-width="1.8"/>
<text x="31" y="160" font-size="10" fill="#33b4b8" text-anchor="start" textLength="18.60" lengthAdjust="spacingAndGlyphs" xml:space="preserve" >USB</text>
<rect x="31" y="161" width="7" height="1" fill="#33b4b8" />
<circle cx="21" cy="173" r="5.1" fill="#fdfdfd" stroke="#7c7c7c" stroke-width="1.8"/>
<text x="31" y="176" font-size="10" fill="#33b4b8" text-anchor="start" textLength="17.00" lengthAdjust="spacingAndGlyphs" xml:space="preserve" >LSB</text>
<rect x="31" y="177" width="5" height="1" fill="#33b4b8" />
<circle cx="21" cy="189" r="5.1" fill="#fdfdfd" stroke="#7c7c7c" stroke-width="1.8"/>
<text x="31" y="192" font-size="10" fill="#33b4b8" text-anchor="start" textLength="19.50" lengthAdjust="spacingAndGlyphs" xml:space="preserve" >DRM</text>
<rect x="31" y="193" width="7" height="1" fill="#33b4b8" />
<circle cx="21" cy="205" r="5.1" fill="#fdfdfd" stroke="#7c7c7c" stroke-width="1.8"/>
<text x="31" y="208" font-size="10" fill="#33b4b8" text-anchor="start" textLength="13.00" lengthAdjust="spacingAndGlyphs" xml:space="preserve" >FM</text>
<rect x="31" y="209" width="5" height="1" fill="#33b4b8" />
<circle cx="59" cy="141" r="5.1" fill="#fdfdfd" stroke="#7c7c7c" stroke-width="1.8"/>
<text x="69" y="144" font-size="10" fill="#33b4b8" text-anchor="start" textLength="12.50" lengthAdjust="spacingAndGlyphs" xml:space="preserve" >BC</text>
<rect x="69" y="145" width="6" height="1" fill="#33b4b8" />
<circle cx="59" cy="173" r="5.1" fill="#fdfdfd" stroke="#7c7c7c" stroke-width="1.8"/>
<text x="69" y="176" font-size="10" fill="#33b4b8" text-anchor="start" textLength="19.00" lengthAdjust="spacingAndGlyphs" xml:space="preserve" >AM1</text>
<rect x="69" y="177" width="7" height="1" fill="#33b4b8" />
<circle cx="59" cy="189" r="5.1" fill="#fdfdfd" stroke="#7c7c7c" stroke-width="1.8"/>
<text x="69" y="192" font-size="10" fill="#33b4b8" text-anchor="start" textLength="18.00" lengthAdjust="spacingAndGlyphs" xml:space="preserve" >Pass</text>
<rect x="69" y="193" width="6" height="1" fill="#33b4b8" />
<rect x="95" y="123" width="6" height="1" fill="#6a6a6a" />
<rect x="140" y="123" width="69" height="1" fill="#6a6a6a" />
<rect x="95" y="123" width="1" height="98" fill="#6a6a6a" />
<rect x="208" y="123" width="1" height="98" fill="#6a6a6a" />
<rect x="95" y="220" width="114" height="1" fill="#6a6a6a" />
<rect x="96" y="124" width="5" height="1" fill="#f4f4f4" />
<rect x="140" y="124" width="68" height="1" fill="#f4f4f4" />
<rect x="96" y="124" width="1" height="96" fill="#f4f4f4" />
<rect x="207" y="124" width="1" height="96" fill="#f4f4f4" />
<rect x="96" y="219" width="112" height="1" fill="#f4f4f4" />
<text x="103" y="128" font-size="11" fill="#33b4b8" text-anchor="start" textLength="34.00" lengthAdjust="spacingAndGlyphs" xml:space="preserve" >Filters</text>
<circle cx="106" cy="141" r="5.1" fill="#fdfdfd" stroke="#7c7c7c" stroke-width="1.8"/>
<text x="116" y="144" font-size="10" fill="#33b4b8" text-anchor="start" textLength="28.00" lengthAdjust="spacingAndGlyphs" xml:space="preserve" >400 Hz</text>
<circle cx="106" cy="157" r="5.1" fill="#fdfdfd" stroke="#7c7c7c" stroke-width="1.8"/>
<circle cx="106" cy="157" r="2.1" fill="#000"/>
<text x="116" y="160" font-size="10" fill="#33b4b8" text-anchor="start" textLength="31.00" lengthAdjust="spacingAndGlyphs" xml:space="preserve" >2,2 kHz</text>
<circle cx="106" cy="173" r="5.1" fill="#fdfdfd" stroke="#7c7c7c" stroke-width="1.8"/>
<text x="116" y="176" font-size="10" fill="#33b4b8" text-anchor="start" textLength="31.00" lengthAdjust="spacingAndGlyphs" xml:space="preserve" >3,2 kHz</text>
<circle cx="106" cy="189" r="5.1" fill="#fdfdfd" stroke="#7c7c7c" stroke-width="1.8"/>
<text x="116" y="192" font-size="10" fill="#33b4b8" text-anchor="start" textLength="33.00" lengthAdjust="spacingAndGlyphs" xml:space="preserve" >4.0 KHz</text>
<circle cx="106" cy="205" r="5.1" fill="#fdfdfd" stroke="#7c7c7c" stroke-width="1.8"/>
<text x="116" y="208" font-size="10" fill="#33b4b8" text-anchor="start" textLength="33.00" lengthAdjust="spacingAndGlyphs" xml:space="preserve" >5.0 KHz</text>
<rect x="159" y="135" width="12" height="12" fill="#ffffff" />
<rect x="159" y="135" width="11" height="1" fill="#a0a0a0" />
<rect x="159" y="135" width="1" height="11" fill="#a0a0a0" />
<rect x="160" y="136" width="9" height="1" fill="#696969" />
<rect x="160" y="136" width="1" height="9" fill="#696969" />
<rect x="160" y="145" width="10" height="1" fill="#e3e3e3" />
<rect x="169" y="136" width="1" height="10" fill="#e3e3e3" />
<text x="176" y="144" font-size="10" fill="#33b4b8" text-anchor="start" textLength="24.00" lengthAdjust="spacingAndGlyphs" xml:space="preserve" >Notch</text>
<rect x="159" y="151" width="12" height="12" fill="#ffffff" />
<rect x="159" y="151" width="11" height="1" fill="#a0a0a0" />
<rect x="159" y="151" width="1" height="11" fill="#a0a0a0" />
<rect x="160" y="152" width="9" height="1" fill="#696969" />
<rect x="160" y="152" width="1" height="9" fill="#696969" />
<rect x="160" y="161" width="10" height="1" fill="#e3e3e3" />
<rect x="169" y="152" width="1" height="10" fill="#e3e3e3" />
<text x="176" y="160" font-size="10" fill="#33b4b8" text-anchor="start" textLength="23.50" lengthAdjust="spacingAndGlyphs" xml:space="preserve" >Music</text>
<rect x="176" y="161" width="8" height="1" fill="#33b4b8" />
<text x="195" y="193" font-size="10" fill="#33b4b8" text-anchor="end" textLength="33.00" lengthAdjust="spacingAndGlyphs" xml:space="preserve" >2300 Hz</text>
<text x="195" y="209" font-size="10" fill="#33b4b8" text-anchor="end" textLength="17.00" lengthAdjust="spacingAndGlyphs" xml:space="preserve" >0 Hz</text>
<rect x="210" y="123" width="6" height="1" fill="#6a6a6a" />
<rect x="246" y="123" width="16" height="1" fill="#6a6a6a" />
<rect x="210" y="123" width="1" height="98" fill="#6a6a6a" />
<rect x="261" y="123" width="1" height="98" fill="#6a6a6a" />
<rect x="210" y="220" width="52" height="1" fill="#6a6a6a" />
<rect x="211" y="124" width="5" height="1" fill="#f4f4f4" />
<rect x="246" y="124" width="15" height="1" fill="#f4f4f4" />
<rect x="211" y="124" width="1" height="96" fill="#f4f4f4" />
<rect x="260" y="124" width="1" height="96" fill="#f4f4f4" />
<rect x="211" y="219" width="50" height="1" fill="#f4f4f4" />
<text x="218" y="128" font-size="11" fill="#33b4b8" text-anchor="start" textLength="27.50" lengthAdjust="spacingAndGlyphs" xml:space="preserve" >Notch</text>
<rect x="246" y="119" width="12" height="12" fill="#ffffff" />
<rect x="246" y="119" width="11" height="1" fill="#a0a0a0" />
<rect x="246" y="119" width="1" height="11" fill="#a0a0a0" />
<rect x="247" y="120" width="9" height="1" fill="#696969" />
<rect x="247" y="120" width="1" height="9" fill="#696969" />
<rect x="247" y="129" width="10" height="1" fill="#e3e3e3" />
<rect x="256" y="120" width="1" height="10" fill="#e3e3e3" />
<rect x="214.5" y="135" width="12" height="12" fill="#ffffff" />
<rect x="214.5" y="135" width="11" height="1" fill="#a0a0a0" />
<rect x="214.5" y="135" width="1" height="11" fill="#a0a0a0" />
<rect x="215.5" y="136" width="9" height="1" fill="#696969" />
<rect x="215.5" y="136" width="1" height="9" fill="#696969" />
<rect x="215.5" y="145" width="10" height="1" fill="#e3e3e3" />
<rect x="224.5" y="136" width="1" height="10" fill="#e3e3e3" />
<text x="231" y="144" font-size="10" fill="#33b4b8" text-anchor="start" textLength="9.00" lengthAdjust="spacingAndGlyphs" xml:space="preserve" >IF</text>
<rect x="214.5" y="151" width="12" height="12" fill="#ffffff" />
<rect x="214.5" y="151" width="11" height="1" fill="#a0a0a0" />
<rect x="214.5" y="151" width="1" height="11" fill="#a0a0a0" />
<rect x="215.5" y="152" width="9" height="1" fill="#696969" />
<rect x="215.5" y="152" width="1" height="9" fill="#696969" />
<rect x="215.5" y="161" width="10" height="1" fill="#e3e3e3" />
<rect x="224.5" y="152" width="1" height="10" fill="#e3e3e3" />
<text x="231" y="160" font-size="10" fill="#33b4b8" text-anchor="start" textLength="26.00" lengthAdjust="spacingAndGlyphs" xml:space="preserve" >Mirror</text>
<rect x="214.5" y="167" width="12" height="12" fill="#ffffff" />
<rect x="214.5" y="167" width="11" height="1" fill="#a0a0a0" />
<rect x="214.5" y="167" width="1" height="11" fill="#a0a0a0" />
<rect x="215.5" y="168" width="9" height="1" fill="#696969" />
<rect x="215.5" y="168" width="1" height="9" fill="#696969" />
<rect x="215.5" y="177" width="10" height="1" fill="#e3e3e3" />
<rect x="224.5" y="168" width="1" height="10" fill="#e3e3e3" />
<text x="231" y="176" font-size="10" fill="#33b4b8" text-anchor="start" textLength="20.00" lengthAdjust="spacingAndGlyphs" xml:space="preserve" >Auto</text>
<text x="255.5" y="194" font-size="10" fill="#33b4b8" text-anchor="end" textLength="32.00" lengthAdjust="spacingAndGlyphs" xml:space="preserve" >1000 Hz</text>
<text x="255.5" y="210" font-size="10" fill="#33b4b8" text-anchor="end" textLength="27.00" lengthAdjust="spacingAndGlyphs" xml:space="preserve" >100 Hz</text>
<rect x="263" y="123" width="6" height="1" fill="#6a6a6a" />
<rect x="302" y="123" width="15" height="1" fill="#6a6a6a" />
<rect x="263" y="123" width="1" height="98" fill="#6a6a6a" />
<rect x="316" y="123" width="1" height="98" fill="#6a6a6a" />
<rect x="263" y="220" width="54" height="1" fill="#6a6a6a" />
<rect x="264" y="124" width="5" height="1" fill="#f4f4f4" />
<rect x="302" y="124" width="14" height="1" fill="#f4f4f4" />
<rect x="264" y="124" width="1" height="96" fill="#f4f4f4" />
<rect x="315" y="124" width="1" height="96" fill="#f4f4f4" />
<rect x="264" y="219" width="52" height="1" fill="#f4f4f4" />
<text x="271" y="128" font-size="11" fill="#33b4b8" text-anchor="start" textLength="31.00" lengthAdjust="spacingAndGlyphs" xml:space="preserve" >IF Filtr</text>
<rect x="302" y="119" width="12" height="12" fill="#ffffff" />
<rect x="302" y="119" width="11" height="1" fill="#a0a0a0" />
<rect x="302" y="119" width="1" height="11" fill="#a0a0a0" />
<rect x="303" y="120" width="9" height="1" fill="#696969" />
<rect x="303" y="120" width="1" height="9" fill="#696969" />
<rect x="303" y="129" width="10" height="1" fill="#e3e3e3" />
<rect x="312" y="120" width="1" height="10" fill="#e3e3e3" />
<circle cx="274" cy="141" r="5.1" fill="#fdfdfd" stroke="#7c7c7c" stroke-width="1.8"/>
<text x="284" y="144" font-size="10" fill="#33b4b8" text-anchor="start" textLength="18.00" lengthAdjust="spacingAndGlyphs" xml:space="preserve" >Man</text>
<circle cx="274" cy="157" r="5.1" fill="#fdfdfd" stroke="#7c7c7c" stroke-width="1.8"/>
<circle cx="274" cy="157" r="2.1" fill="#000"/>
<text x="284" y="160" font-size="10" fill="#33b4b8" text-anchor="start" textLength="22.50" lengthAdjust="spacingAndGlyphs" xml:space="preserve" >Track</text>
<text x="311" y="178" font-size="10" fill="#33b4b8" text-anchor="end" textLength="18.00" lengthAdjust="spacingAndGlyphs" xml:space="preserve" >0 Hz</text>
<text x="311" y="194" font-size="10" fill="#33b4b8" text-anchor="end" textLength="33.00" lengthAdjust="spacingAndGlyphs" xml:space="preserve" >4500 Hz</text>
<text x="311" y="210" font-size="10" fill="#33b4b8" text-anchor="end" textLength="22.50" lengthAdjust="spacingAndGlyphs" xml:space="preserve" >50 Hz</text>
<rect x="318" y="123" width="6" height="1" fill="#6a6a6a" />
<rect x="356" y="123" width="19" height="1" fill="#6a6a6a" />
<rect x="318" y="123" width="1" height="98" fill="#6a6a6a" />
<rect x="374" y="123" width="1" height="98" fill="#6a6a6a" />
<rect x="318" y="220" width="57" height="1" fill="#6a6a6a" />
<rect x="319" y="124" width="5" height="1" fill="#f4f4f4" />
<rect x="356" y="124" width="18" height="1" fill="#f4f4f4" />
<rect x="319" y="124" width="1" height="96" fill="#f4f4f4" />
<rect x="373" y="124" width="1" height="96" fill="#f4f4f4" />
<rect x="319" y="219" width="55" height="1" fill="#f4f4f4" />
<text x="327" y="128" font-size="11" fill="#33b4b8" text-anchor="start" textLength="20.50" lengthAdjust="spacingAndGlyphs" xml:space="preserve" >AGC</text>
<rect x="357.5" y="119" width="12" height="12" fill="#ffffff" />
<rect x="357.5" y="119" width="11" height="1" fill="#a0a0a0" />
<rect x="357.5" y="119" width="1" height="11" fill="#a0a0a0" />
<rect x="358.5" y="120" width="9" height="1" fill="#696969" />
<rect x="358.5" y="120" width="1" height="9" fill="#696969" />
<rect x="358.5" y="129" width="10" height="1" fill="#e3e3e3" />
<rect x="367.5" y="120" width="1" height="10" fill="#e3e3e3" />
<path d="M360.1 124 L362.4 126.8 L367.1 121.8" stroke="#000" stroke-width="2.6" fill="none"/>
<circle cx="329" cy="141" r="5.1" fill="#fdfdfd" stroke="#7c7c7c" stroke-width="1.8"/>
<text x="339" y="144" font-size="10" fill="#33b4b8" text-anchor="start" textLength="17.50" lengthAdjust="spacingAndGlyphs" xml:space="preserve" >Fast</text>
<circle cx="329" cy="157" r="5.1" fill="#fdfdfd" stroke="#7c7c7c" stroke-width="1.8"/>
<text x="339" y="160" font-size="10" fill="#33b4b8" text-anchor="start" textLength="29.00" lengthAdjust="spacingAndGlyphs" xml:space="preserve" >Normal</text>
<circle cx="329" cy="173" r="5.1" fill="#fdfdfd" stroke="#7c7c7c" stroke-width="1.8"/>
<circle cx="329" cy="173" r="2.1" fill="#000"/>
<text x="339" y="176" font-size="10" fill="#33b4b8" text-anchor="start" textLength="20.00" lengthAdjust="spacingAndGlyphs" xml:space="preserve" >Slow</text>
<text x="372" y="194" font-size="10" fill="#33b4b8" text-anchor="end" textLength="30.00" lengthAdjust="spacingAndGlyphs" xml:space="preserve" >1,0  mS</text>
<text x="364" y="210" font-size="10" fill="#33b4b8" text-anchor="end" textLength="22.00" lengthAdjust="spacingAndGlyphs" xml:space="preserve" >1,0  S</text>
<rect x="376" y="123" width="8" height="1" fill="#6a6a6a" />
<rect x="480" y="123" width="104" height="1" fill="#6a6a6a" />
<rect x="619" y="123" width="217" height="1" fill="#6a6a6a" />
<rect x="376" y="123" width="1" height="99" fill="#6a6a6a" />
<rect x="835" y="123" width="1" height="99" fill="#6a6a6a" />
<rect x="376" y="221" width="460" height="1" fill="#6a6a6a" />
<rect x="377" y="124" width="7" height="1" fill="#f4f4f4" />
<rect x="480" y="124" width="104" height="1" fill="#f4f4f4" />
<rect x="619" y="124" width="216" height="1" fill="#f4f4f4" />
<rect x="377" y="124" width="1" height="97" fill="#f4f4f4" />
<rect x="834" y="124" width="1" height="97" fill="#f4f4f4" />
<rect x="377" y="220" width="458" height="1" fill="#f4f4f4" />
<text x="386" y="128" font-size="11" fill="#33b4b8" text-anchor="start" textLength="90.50" lengthAdjust="spacingAndGlyphs" xml:space="preserve" >BBC World Service</text>
<text x="586" y="128" font-size="11" fill="#33b4b8" text-anchor="start" textLength="30.00" lengthAdjust="spacingAndGlyphs" xml:space="preserve" >W/SW</text>
<circle cx="387.0" cy="148.5" r="5.1" fill="#fdfdfd" stroke="#7c7c7c" stroke-width="1.8"/>
<circle cx="387.0" cy="148.5" r="2.1" fill="#000"/>
<text x="398.0" y="152" font-size="10" fill="#33b4b8" text-anchor="start" textLength="28.00" lengthAdjust="spacingAndGlyphs" xml:space="preserve" >W/SW</text>
<circle cx="437.1" cy="148.5" r="5.1" fill="#fdfdfd" stroke="#7c7c7c" stroke-width="1.8"/>
<text x="448.1" y="152" font-size="10" fill="#33b4b8" text-anchor="start" textLength="26.00" lengthAdjust="spacingAndGlyphs" xml:space="preserve" >E/SE</text>
<circle cx="487.2" cy="148.5" r="5.1" fill="#fdfdfd" stroke="#7c7c7c" stroke-width="1.8"/>
<text x="498.2" y="152" font-size="10" fill="#33b4b8" text-anchor="start" textLength="16.00" lengthAdjust="spacingAndGlyphs" xml:space="preserve" >CIS</text>
<circle cx="537.3" cy="148.5" r="5.1" fill="#fdfdfd" stroke="#7c7c7c" stroke-width="1.8"/>
<text x="548.3" y="152" font-size="10" fill="#33b4b8" text-anchor="start" textLength="14.00" lengthAdjust="spacingAndGlyphs" xml:space="preserve" >NA</text>
<circle cx="387" cy="189" r="5.1" fill="#fdfdfd" stroke="#7c7c7c" stroke-width="1.8"/>
<text x="397.5" y="192.3" font-size="9" fill="#33b4b8" text-anchor="start" textLength="13.97" lengthAdjust="spacingAndGlyphs" xml:space="preserve" >198</text>
<circle cx="387" cy="206.5" r="5.1" fill="#fdfdfd" stroke="#7c7c7c" stroke-width="1.8"/>
<text x="397.5" y="210" font-size="9" fill="#33b4b8" text-anchor="start" textLength="18.62" lengthAdjust="spacingAndGlyphs" xml:space="preserve" >7124</text>
<circle cx="437" cy="189" r="5.1" fill="#fdfdfd" stroke="#7c7c7c" stroke-width="1.8"/>
<text x="447.5" y="192.3" font-size="9" fill="#33b4b8" text-anchor="start" textLength="13.97" lengthAdjust="spacingAndGlyphs" xml:space="preserve" >648</text>
<circle cx="437" cy="206.5" r="5.1" fill="#fdfdfd" stroke="#7c7c7c" stroke-width="1.8"/>
<text x="447.5" y="210" font-size="9" fill="#33b4b8" text-anchor="start" textLength="18.62" lengthAdjust="spacingAndGlyphs" xml:space="preserve" >7105</text>
<circle cx="487" cy="189" r="5.1" fill="#fdfdfd" stroke="#7c7c7c" stroke-width="1.8"/>
<text x="497.5" y="192.3" font-size="9" fill="#33b4b8" text-anchor="start" textLength="18.62" lengthAdjust="spacingAndGlyphs" xml:space="preserve" >1296</text>
<circle cx="487" cy="206.5" r="5.1" fill="#fdfdfd" stroke="#7c7c7c" stroke-width="1.8"/>
<text x="497.5" y="210" font-size="9" fill="#33b4b8" text-anchor="start" textLength="14.89" lengthAdjust="spacingAndGlyphs" xml:space="preserve" >P12</text>
<circle cx="537" cy="189" r="5.1" fill="#fdfdfd" stroke="#7c7c7c" stroke-width="1.8"/>
<text x="547.5" y="192.3" font-size="9" fill="#33b4b8" text-anchor="start" textLength="18.62" lengthAdjust="spacingAndGlyphs" xml:space="preserve" >6195</text>
<circle cx="537" cy="206.5" r="5.1" fill="#fdfdfd" stroke="#7c7c7c" stroke-width="1.8"/>
<text x="547.5" y="210" font-size="9" fill="#33b4b8" text-anchor="start" textLength="14.89" lengthAdjust="spacingAndGlyphs" xml:space="preserve" >P13</text>
<circle cx="587" cy="189" r="5.1" fill="#fdfdfd" stroke="#7c7c7c" stroke-width="1.8"/>
<text x="597.5" y="192.3" font-size="9" fill="#33b4b8" text-anchor="start" textLength="18.62" lengthAdjust="spacingAndGlyphs" xml:space="preserve" >9410</text>
<circle cx="587" cy="206.5" r="5.1" fill="#fdfdfd" stroke="#7c7c7c" stroke-width="1.8"/>
<text x="597.5" y="210" font-size="9" fill="#33b4b8" text-anchor="start" textLength="14.89" lengthAdjust="spacingAndGlyphs" xml:space="preserve" >P14</text>
<circle cx="637" cy="189" r="5.1" fill="#fdfdfd" stroke="#7c7c7c" stroke-width="1.8"/>
<text x="647.5" y="192.3" font-size="9" fill="#33b4b8" text-anchor="start" textLength="23.28" lengthAdjust="spacingAndGlyphs" xml:space="preserve" >12095</text>
<circle cx="637" cy="206.5" r="5.1" fill="#fdfdfd" stroke="#7c7c7c" stroke-width="1.8"/>
<text x="647.5" y="210" font-size="9" fill="#33b4b8" text-anchor="start" textLength="14.89" lengthAdjust="spacingAndGlyphs" xml:space="preserve" >P15</text>
<circle cx="687" cy="189" r="5.1" fill="#fdfdfd" stroke="#7c7c7c" stroke-width="1.8"/>
<text x="697.5" y="192.3" font-size="9" fill="#33b4b8" text-anchor="start" textLength="23.28" lengthAdjust="spacingAndGlyphs" xml:space="preserve" >15485</text>
<circle cx="687" cy="206.5" r="5.1" fill="#fdfdfd" stroke="#7c7c7c" stroke-width="1.8"/>
<text x="697.5" y="210" font-size="9" fill="#33b4b8" text-anchor="start" textLength="14.89" lengthAdjust="spacingAndGlyphs" xml:space="preserve" >P16</text>
<circle cx="737" cy="189" r="5.1" fill="#fdfdfd" stroke="#7c7c7c" stroke-width="1.8"/>
<text x="747.5" y="192.3" font-size="9" fill="#33b4b8" text-anchor="start" textLength="23.28" lengthAdjust="spacingAndGlyphs" xml:space="preserve" >17640</text>
<circle cx="737" cy="206.5" r="5.1" fill="#fdfdfd" stroke="#7c7c7c" stroke-width="1.8"/>
<text x="747.5" y="210" font-size="9" fill="#33b4b8" text-anchor="start" textLength="14.89" lengthAdjust="spacingAndGlyphs" xml:space="preserve" >P17</text>
<circle cx="787" cy="189" r="5.1" fill="#fdfdfd" stroke="#7c7c7c" stroke-width="1.8"/>
<text x="797.5" y="192.3" font-size="9" fill="#33b4b8" text-anchor="start" textLength="18.62" lengthAdjust="spacingAndGlyphs" xml:space="preserve" >8241</text>
<circle cx="787" cy="206.5" r="5.1" fill="#fdfdfd" stroke="#7c7c7c" stroke-width="1.8"/>
<text x="797.5" y="210" font-size="9" fill="#33b4b8" text-anchor="start" textLength="14.89" lengthAdjust="spacingAndGlyphs" xml:space="preserve" >P18</text>
<rect x="12" y="228" width="822" height="2" fill="#8c8c8c" />
<rect x="12" y="228" width="2" height="41" fill="#8c8c8c" />
<rect x="12" y="267" width="822" height="2" fill="#ffffff" />
<rect x="832" y="228" width="2" height="41" fill="#ffffff" />
<rect x="18" y="238" width="20" height="20" fill="#6a6a6a" />
<rect x="18" y="238" width="19" height="19" fill="#ffffff" />
<rect x="19" y="239" width="18" height="18" fill="#a8a8a8" />
<rect x="19" y="239" width="17" height="17" fill="#efefef" />
<rect x="39" y="238" width="20" height="20" fill="#6a6a6a" />
<rect x="39" y="238" width="19" height="19" fill="#ffffff" />
<rect x="40" y="239" width="18" height="18" fill="#a8a8a8" />
<rect x="40" y="239" width="17" height="17" fill="#efefef" />
<rect x="59" y="238" width="20" height="20" fill="#6a6a6a" />
<rect x="59" y="238" width="19" height="19" fill="#ffffff" />
<rect x="60" y="239" width="18" height="18" fill="#a8a8a8" />
<rect x="60" y="239" width="17" height="17" fill="#efefef" />
<rect x="80" y="238" width="20" height="20" fill="#6a6a6a" />
<rect x="80" y="238" width="19" height="19" fill="#ffffff" />
<rect x="81" y="239" width="18" height="18" fill="#a8a8a8" />
<rect x="81" y="239" width="17" height="17" fill="#efefef" />
<rect x="101" y="238" width="20" height="20" fill="#6a6a6a" />
<rect x="101" y="238" width="19" height="19" fill="#ffffff" />
<rect x="102" y="239" width="18" height="18" fill="#a8a8a8" />
<rect x="102" y="239" width="17" height="17" fill="#efefef" />
<rect x="121" y="238" width="20" height="20" fill="#6a6a6a" />
<rect x="121" y="238" width="19" height="19" fill="#ffffff" />
<rect x="122" y="239" width="18" height="18" fill="#a8a8a8" />
<rect x="122" y="239" width="17" height="17" fill="#efefef" />
<rect x="142" y="238" width="20" height="20" fill="#6a6a6a" />
<rect x="142" y="238" width="19" height="19" fill="#ffffff" />
<rect x="143" y="239" width="18" height="18" fill="#a8a8a8" />
<rect x="143" y="239" width="17" height="17" fill="#efefef" />
<rect x="174" y="238" width="20" height="20" fill="#6a6a6a" />
<rect x="174" y="238" width="19" height="19" fill="#ffffff" />
<rect x="175" y="239" width="18" height="18" fill="#a8a8a8" />
<rect x="175" y="239" width="17" height="17" fill="#efefef" />
<rect x="198" y="238" width="20" height="20" fill="#6a6a6a" />
<rect x="198" y="238" width="19" height="19" fill="#ffffff" />
<rect x="199" y="239" width="18" height="18" fill="#a8a8a8" />
<rect x="199" y="239" width="17" height="17" fill="#efefef" />
<rect x="222" y="238" width="20" height="20" fill="#6a6a6a" />
<rect x="222" y="238" width="19" height="19" fill="#ffffff" />
<rect x="223" y="239" width="18" height="18" fill="#a8a8a8" />
<rect x="223" y="239" width="17" height="17" fill="#efefef" />
<circle cx="27.7" cy="247.6" r="4.7" fill="#f40000"/>
<path d="M45.5 242 L52.5 247.5 L45.5 253 Z" fill="#9c9c9c"/>
<rect x="64" y="242" width="3" height="11" fill="#9c9c9c" />
<rect x="70" y="242" width="3" height="11" fill="#9c9c9c" />
<rect x="85" y="242" width="10" height="11" fill="#9c9c9c" />
<path d="M103.5 242 L108 247.5 L103.5 253 M107.5 242 L112 247.5 L107.5 253" stroke="#9c9c9c" stroke-width="2" fill="none"/>
<rect x="114" y="242" width="2" height="11" fill="#9c9c9c" />
<rect x="124.5" y="242" width="2" height="11" fill="#9c9c9c" />
<path d="M133.5 242 L129 247.5 L133.5 253 M137.5 242 L133 247.5 L137.5 253" stroke="#9c9c9c" stroke-width="2" fill="none"/>
<path d="M146.5 249 Q146.5 244 152 244 L155.5 244 M157.5 246.5 Q157.5 251.5 152 251.5 L148.5 251.5" stroke="#9c9c9c" stroke-width="1.6" fill="none"/>
<path d="M151.5 241.5 L154.5 244 L151.5 246.5 M152.5 249 L149.5 251.5 L152.5 254" stroke="#9c9c9c" stroke-width="1.3" fill="none"/>
<path d="M178 244.5 L178 254.5 L189.5 254.5 L189.5 248 L183 248 L182 244.5 Z" fill="#f2f27a" stroke="#5a5a20" stroke-width="0.8"/>
<path d="M180.5 249.5 L191.5 249.5 L189 254.5 L178 254.5 Z" fill="#8c8c1e"/>
<path d="M183.5 243.5 Q186.5 240.5 190 242.5 L190 245" stroke="#3a3a3a" stroke-width="1" fill="none"/>
<rect x="202" y="242" width="12" height="12" fill="#9c9c9c" />
<rect x="204.5" y="243" width="6.5" height="4.5" fill="#f0f0f0" />
<rect x="208.5" y="251" width="1.6" height="2.5" fill="#f0f0f0" />
<circle cx="231.7" cy="247.7" r="4.6" fill="#9c9c9c"/>
<rect x="250" y="239" width="196" height="2" fill="#8c8c8c" />
<rect x="250" y="239" width="2" height="18" fill="#8c8c8c" />
<rect x="250" y="255" width="196" height="2" fill="#ffffff" />
<rect x="444" y="239" width="2" height="18" fill="#ffffff" />
<text x="458" y="248" font-size="10" fill="#d42020" text-anchor="start" textLength="45.00" lengthAdjust="spacingAndGlyphs" xml:space="preserve" >00:00:00</text>
<text x="462" y="260" font-size="10" fill="#33b4b8" text-anchor="start" textLength="37.00" lengthAdjust="spacingAndGlyphs" xml:space="preserve" >Elapsed</text>
<text x="519" y="248" font-size="10" fill="#d42020" text-anchor="start" textLength="62.00" lengthAdjust="spacingAndGlyphs" xml:space="preserve" >000,000,000</text>
<text x="528.5" y="260" font-size="10" fill="#33b4b8" text-anchor="start" textLength="42.00" lengthAdjust="spacingAndGlyphs" xml:space="preserve" >Size (KB)</text>
<rect x="594" y="236" width="6" height="1" fill="#6a6a6a" />
<rect x="659" y="236" width="168" height="1" fill="#6a6a6a" />
<rect x="594" y="236" width="1" height="29" fill="#6a6a6a" />
<rect x="826" y="236" width="1" height="29" fill="#6a6a6a" />
<rect x="594" y="264" width="233" height="1" fill="#6a6a6a" />
<rect x="595" y="237" width="5" height="1" fill="#f4f4f4" />
<rect x="659" y="237" width="167" height="1" fill="#f4f4f4" />
<rect x="595" y="237" width="1" height="27" fill="#f4f4f4" />
<rect x="825" y="237" width="1" height="27" fill="#f4f4f4" />
<rect x="595" y="263" width="231" height="1" fill="#f4f4f4" />
<text x="603" y="240.5" font-size="10" fill="#33b4b8" text-anchor="start" textLength="53.00" lengthAdjust="spacingAndGlyphs" xml:space="preserve" >Sample Rate</text>
<circle cx="609" cy="250" r="5.1" fill="#fdfdfd" stroke="#7c7c7c" stroke-width="1.8"/>
<text x="619" y="254" font-size="10" fill="#33b4b8" text-anchor="start" textLength="16.50" lengthAdjust="spacingAndGlyphs" xml:space="preserve" >48K</text>
<circle cx="645" cy="250" r="5.1" fill="#fdfdfd" stroke="#7c7c7c" stroke-width="1.8"/>
<circle cx="645" cy="250" r="2.1" fill="#000"/>
<text x="654.5" y="254" font-size="10" fill="#33b4b8" text-anchor="start" textLength="16.50" lengthAdjust="spacingAndGlyphs" xml:space="preserve" >24K</text>
<circle cx="681" cy="250" r="5.1" fill="#fdfdfd" stroke="#7c7c7c" stroke-width="1.8"/>
<text x="691.3" y="254" font-size="10" fill="#33b4b8" text-anchor="start" textLength="16.50" lengthAdjust="spacingAndGlyphs" xml:space="preserve" >12K</text>
<circle cx="717" cy="250" r="5.1" fill="#fdfdfd" stroke="#7c7c7c" stroke-width="1.8"/>
<text x="726" y="254" font-size="10" fill="#33b4b8" text-anchor="start" textLength="11.00" lengthAdjust="spacingAndGlyphs" xml:space="preserve" >6K</text>
<circle cx="745" cy="250" r="5.1" fill="#fdfdfd" stroke="#7c7c7c" stroke-width="1.8"/>
<text x="754.7" y="254" font-size="10" fill="#33b4b8" text-anchor="start" textLength="10.00" lengthAdjust="spacingAndGlyphs" xml:space="preserve" >3k</text>
<text x="778.5" y="254" font-size="10" fill="#33b4b8" text-anchor="start" textLength="43.50" lengthAdjust="spacingAndGlyphs" xml:space="preserve" >165 MB/Hr</text>
<rect x="12" y="275" width="822" height="2" fill="#8c8c8c" />
<rect x="12" y="275" width="2" height="192" fill="#8c8c8c" />
<rect x="12" y="465" width="822" height="2" fill="#ffffff" />
<rect x="832" y="275" width="2" height="192" fill="#ffffff" />
<circle cx="23" cy="281" r="5.1" fill="#fdfdfd" stroke="#7c7c7c" stroke-width="1.8"/>
<circle cx="23" cy="281" r="2.1" fill="#000"/>
<text x="33" y="285" font-size="10" fill="#33b4b8" text-anchor="start" textLength="42.50" lengthAdjust="spacingAndGlyphs" xml:space="preserve" >Soundcard</text>
<circle cx="93" cy="281" r="5.1" fill="#fdfdfd" stroke="#7c7c7c" stroke-width="1.8"/>
<text x="103" y="285" font-size="10" fill="#33b4b8" text-anchor="start" textLength="44.00" lengthAdjust="spacingAndGlyphs" xml:space="preserve" >Pre Demod</text>
<circle cx="162" cy="281" r="5.1" fill="#fdfdfd" stroke="#7c7c7c" stroke-width="1.8"/>
<text x="172" y="285" font-size="10" fill="#33b4b8" text-anchor="start" textLength="50.00" lengthAdjust="spacingAndGlyphs" xml:space="preserve" >Post Demod</text>
<circle cx="232" cy="281" r="5.1" fill="#fdfdfd" stroke="#7c7c7c" stroke-width="1.8"/>
<text x="242" y="285" font-size="10" fill="#33b4b8" text-anchor="start" textLength="31.00" lengthAdjust="spacingAndGlyphs" xml:space="preserve" >AF Out</text>
<circle cx="301" cy="281" r="5.1" fill="#fdfdfd" stroke="#7c7c7c" stroke-width="1.8"/>
<text x="311" y="285" font-size="10" fill="#33b4b8" text-anchor="start" textLength="53.00" lengthAdjust="spacingAndGlyphs" xml:space="preserve" >Corrected IF</text>
<rect x="630" y="276" width="17" height="11" fill="#6a6a6a" />
<rect x="630" y="276" width="16" height="10" fill="#ffffff" />
<rect x="631" y="277" width="15" height="9" fill="#a8a8a8" />
<rect x="631" y="277" width="14" height="8" fill="#efefef" />
<rect x="636" y="281" width="4" height="1.3" fill="#111" />
<rect x="657" y="276" width="17" height="11" fill="#6a6a6a" />
<rect x="657" y="276" width="16" height="10" fill="#ffffff" />
<rect x="658" y="277" width="15" height="9" fill="#a8a8a8" />
<rect x="658" y="277" width="14" height="8" fill="#efefef" />
<rect x="662" y="281" width="7" height="1.3" fill="#111" />
<rect x="664.9" y="278" width="1.3" height="7" fill="#111" />
<rect x="14" y="287" width="660" height="3" fill="#0c3c0c" />
<rect x="14" y="292" width="660" height="3" fill="#0c3c0c" />
<rect x="281" y="287" width="126" height="6" fill="#c2c2c2" />
<rect x="281" y="297" width="128" height="164" fill="#007070" />
<rect x="14" y="297" width="1" height="164" fill="#1f781f" />
<rect x="69" y="297" width="1" height="164" fill="#1f781f" />
<rect x="124" y="297" width="1" height="164" fill="#1f781f" />
<rect x="179" y="297" width="1" height="164" fill="#1f781f" />
<rect x="234" y="297" width="1" height="164" fill="#1f781f" />
<rect x="289" y="297" width="1" height="164" fill="#228468" />
<rect x="344" y="297" width="1" height="164" fill="#228468" />
<rect x="399" y="297" width="1" height="164" fill="#228468" />
<rect x="454" y="297" width="1" height="164" fill="#1f781f" />
<rect x="509" y="297" width="1" height="164" fill="#1f781f" />
<rect x="563" y="297" width="1" height="164" fill="#1f781f" />
<rect x="618" y="297" width="1" height="164" fill="#1f781f" />
<rect x="673" y="297" width="1" height="164" fill="#1f781f" />
<rect x="14" y="297" width="267" height="1" fill="#1f781f" />
<rect x="281" y="297" width="128" height="1" fill="#228468" />
<rect x="409" y="297" width="265" height="1" fill="#1f781f" />
<rect x="14" y="313" width="267" height="1" fill="#1f781f" />
<rect x="281" y="313" width="128" height="1" fill="#228468" />
<rect x="409" y="313" width="265" height="1" fill="#1f781f" />
<rect x="14" y="330" width="267" height="1" fill="#1f781f" />
<rect x="281" y="330" width="128" height="1" fill="#228468" />
<rect x="409" y="330" width="265" height="1" fill="#1f781f" />
<rect x="14" y="346" width="267" height="1" fill="#1f781f" />
<rect x="281" y="346" width="128" height="1" fill="#228468" />
<rect x="409" y="346" width="265" height="1" fill="#1f781f" />
<rect x="14" y="362" width="267" height="1" fill="#1f781f" />
<rect x="281" y="362" width="128" height="1" fill="#228468" />
<rect x="409" y="362" width="265" height="1" fill="#1f781f" />
<rect x="14" y="378" width="267" height="1" fill="#1f781f" />
<rect x="281" y="378" width="128" height="1" fill="#228468" />
<rect x="409" y="378" width="265" height="1" fill="#1f781f" />
<rect x="14" y="395" width="267" height="1" fill="#1f781f" />
<rect x="281" y="395" width="128" height="1" fill="#228468" />
<rect x="409" y="395" width="265" height="1" fill="#1f781f" />
<rect x="14" y="411" width="267" height="1" fill="#1f781f" />
<rect x="281" y="411" width="128" height="1" fill="#228468" />
<rect x="409" y="411" width="265" height="1" fill="#1f781f" />
<rect x="14" y="428" width="267" height="1" fill="#1f781f" />
<rect x="281" y="428" width="128" height="1" fill="#228468" />
<rect x="409" y="428" width="265" height="1" fill="#1f781f" />
<rect x="14" y="444" width="267" height="1" fill="#1f781f" />
<rect x="281" y="444" width="128" height="1" fill="#228468" />
<rect x="409" y="444" width="265" height="1" fill="#1f781f" />
<rect x="14" y="460" width="267" height="1" fill="#1f781f" />
<rect x="281" y="460" width="128" height="1" fill="#228468" />
<rect x="409" y="460" width="265" height="1" fill="#1f781f" />
<g clip-path="url(#gclip)">
<text x="14.5" y="376" font-size="9.6" fill="#56e0e6" text-anchor="middle" textLength="19.50" lengthAdjust="spacingAndGlyphs" xml:space="preserve" stroke="#56e0e6" stroke-width="0.25">7318</text>
<text x="69.5" y="376" font-size="9.6" fill="#56e0e6" text-anchor="middle" textLength="19.50" lengthAdjust="spacingAndGlyphs" xml:space="preserve" stroke="#56e0e6" stroke-width="0.25">7320</text>
<text x="124.5" y="376" font-size="9.6" fill="#56e0e6" text-anchor="middle" textLength="19.50" lengthAdjust="spacingAndGlyphs" xml:space="preserve" stroke="#56e0e6" stroke-width="0.25">7322</text>
<text x="179.5" y="376" font-size="9.6" fill="#56e0e6" text-anchor="middle" textLength="19.50" lengthAdjust="spacingAndGlyphs" xml:space="preserve" stroke="#56e0e6" stroke-width="0.25">7324</text>
<text x="234.5" y="376" font-size="9.6" fill="#56e0e6" text-anchor="middle" textLength="19.50" lengthAdjust="spacingAndGlyphs" xml:space="preserve" stroke="#56e0e6" stroke-width="0.25">7326</text>
<text x="289.5" y="376" font-size="9.6" fill="#56e0e6" text-anchor="middle" textLength="19.50" lengthAdjust="spacingAndGlyphs" xml:space="preserve" stroke="#56e0e6" stroke-width="0.25">7328</text>
<text x="344.5" y="376" font-size="9.6" fill="#56e0e6" text-anchor="middle" textLength="19.50" lengthAdjust="spacingAndGlyphs" xml:space="preserve" stroke="#56e0e6" stroke-width="0.25">7330</text>
<text x="399.5" y="376" font-size="9.6" fill="#56e0e6" text-anchor="middle" textLength="19.50" lengthAdjust="spacingAndGlyphs" xml:space="preserve" stroke="#56e0e6" stroke-width="0.25">7332</text>
<text x="454.5" y="376" font-size="9.6" fill="#56e0e6" text-anchor="middle" textLength="19.50" lengthAdjust="spacingAndGlyphs" xml:space="preserve" stroke="#56e0e6" stroke-width="0.25">7334</text>
<text x="509.5" y="376" font-size="9.6" fill="#56e0e6" text-anchor="middle" textLength="19.50" lengthAdjust="spacingAndGlyphs" xml:space="preserve" stroke="#56e0e6" stroke-width="0.25">7336</text>
<text x="563.5" y="376" font-size="9.6" fill="#56e0e6" text-anchor="middle" textLength="19.50" lengthAdjust="spacingAndGlyphs" xml:space="preserve" stroke="#56e0e6" stroke-width="0.25">7338</text>
<text x="618.5" y="376" font-size="9.6" fill="#56e0e6" text-anchor="middle" textLength="19.50" lengthAdjust="spacingAndGlyphs" xml:space="preserve" stroke="#56e0e6" stroke-width="0.25">7340</text>
<text x="673.5" y="376" font-size="9.6" fill="#56e0e6" text-anchor="middle" textLength="19.50" lengthAdjust="spacingAndGlyphs" xml:space="preserve" stroke="#56e0e6" stroke-width="0.25">7342</text>
<polyline points="14.0,438.0 15.0,433.0 16.0,444.0 17.0,452.0 20.0,440.0 21.3,440.0 22.7,446.2 24.0,446.0 25.2,441.4 26.4,444.8 27.6,439.1 28.8,441.9 30.0,438.0 31.2,438.4 32.4,443.7 33.6,441.0 34.8,447.9 36.0,447.0 37.2,444.2 38.4,445.5 39.6,441.0 40.8,443.4 42.0,439.0 43.2,437.9 44.4,442.9 45.6,440.0 46.8,447.7 48.0,446.0 49.3,441.9 50.7,445.0 52.0,441.0 53.3,437.3 54.7,437.4 56.0,434.0 57.3,435.2 58.7,441.8 60.0,444.0 61.3,440.2 62.7,440.9 64.0,437.0 65.3,438.6 66.7,444.4 68.0,445.0 69.2,441.2 70.4,444.3 71.6,437.5 72.8,440.2 74.0,436.0 75.2,435.1 76.4,440.9 77.6,437.6 78.8,442.4 80.0,442.0 81.2,437.1 82.5,441.7 83.8,433.9 85.0,435.0 86.2,439.1 87.5,436.3 88.8,441.0 90.0,441.0 91.2,437.8 92.4,439.0 93.6,433.5 94.8,436.5 96.0,433.0 97.3,432.5 98.7,439.5 100.0,440.0 101.2,435.3 102.4,439.7 103.6,434.2 104.8,435.1 106.0,432.0 107.2,430.0 108.4,436.0 109.6,431.8 110.8,437.9 112.0,437.0 113.2,434.4 114.4,436.6 115.6,430.1 116.8,433.0 118.0,430.0 119.2,429.2 120.4,432.5 121.6,428.1 122.8,434.3 124.0,432.0 125.2,429.9 126.4,431.9 127.6,428.4 128.8,429.9 130.0,428.0 131.3,427.2 132.7,433.4 134.0,434.0 135.2,430.2 136.4,432.8 137.6,427.8 138.8,430.2 140.0,426.0 141.2,426.1 142.4,431.2 143.6,428.9 144.8,433.5 146.0,433.0 147.3,429.9 148.7,431.3 150.0,428.0 151.2,425.7 152.4,432.4 153.6,428.7 154.8,434.1 156.0,432.0 157.3,428.5 158.7,429.9 160.0,426.0 161.2,424.1 162.4,430.4 163.6,427.8 164.8,433.2 166.0,431.0 167.2,429.1 168.4,431.8 169.6,427.1 170.8,431.1 172.0,429.0 173.2,427.9 174.4,431.4 175.6,429.6 176.8,433.7 178.0,432.0 179.2,429.5 180.4,432.3 181.6,427.2 182.8,430.0 184.0,427.0 185.3,422.2 186.7,425.7 188.0,422.0 189.3,422.7 190.7,430.9 192.0,431.0 193.2,428.2 194.4,429.5 195.6,423.8 196.8,428.2 198.0,424.0 199.2,423.7 200.4,427.8 201.6,425.0 202.8,431.9 204.0,430.0 205.3,426.9 206.7,429.8 208.0,425.0 209.3,423.7 210.7,430.7 212.0,430.0 213.3,425.7 214.7,426.6 216.0,423.0 217.3,417.6 218.7,417.5 220.0,410.0 221.5,408.5 223.0,412.6 224.5,410.0 227.0,425.0 230.0,412.0 232.0,424.0 233.3,421.1 234.7,424.1 236.0,420.0 237.3,419.7 238.7,425.6 240.0,426.0 241.3,421.9 242.7,423.3 244.0,418.0 247.0,425.0 250.0,417.0 251.3,417.5 252.7,421.8 254.0,422.0 257.0,409.0 260.0,423.0 263.0,428.0 266.0,421.0 268.0,427.0 271.0,416.0 274.0,425.0 276.0,418.0 279.0,424.0 281.0,421.0 283.0,433.0 286.0,423.0 289.0,430.0 292.0,424.0 295.0,427.0 298.0,422.0 301.0,425.0 304.0,420.0 306.0,432.0 309.0,410.0 312.0,430.0 313.3,420.4 314.7,418.2 316.0,408.0 319.0,425.0 322.0,401.0 325.0,425.0 328.0,400.0 331.0,418.0 334.0,395.0 336.0,420.0 337.3,406.0 338.7,398.3 340.0,385.0 342.0,415.0 344.0,396.0 345.0,363.0 347.0,410.0 349.0,390.0 351.0,385.0 353.0,415.0 356.0,405.0 358.0,425.0 361.0,418.0 364.0,432.0 367.0,422.0 370.0,430.0 373.0,411.0 376.0,428.0 379.0,405.0 382.0,428.0 385.0,418.0 387.0,432.0 390.0,420.0 393.0,428.0 396.0,417.0 399.0,425.0 402.0,419.0 405.0,423.0 406.2,421.2 407.5,426.9 408.8,425.7 410.0,428.0 413.0,420.0 415.0,413.0 417.0,407.0 419.0,410.0 419.5,400.0 421.0,418.0 423.0,411.0 425.0,420.0 427.0,417.0 429.0,422.0 431.0,418.0 433.0,409.0 434.0,398.0 436.0,412.0 438.0,405.0 440.0,408.0 443.0,418.0 446.0,422.0 449.0,427.0 450.3,428.9 451.7,425.7 453.0,428.0 454.3,428.1 455.7,424.6 457.0,425.0 460.0,417.0 461.0,405.0 463.0,410.0 465.0,408.0 467.0,403.0 470.0,404.0 472.0,408.0 474.0,418.0 477.0,417.0 480.0,425.0 482.0,410.0 483.0,427.0 486.0,423.0 487.3,424.1 488.7,419.4 490.0,421.0 493.0,427.0 496.0,428.0 499.0,432.0 502.0,423.0 504.0,430.0 507.0,424.0 509.0,430.0 510.3,428.3 511.7,422.2 513.0,421.0 515.0,425.0 518.0,428.0 519.0,433.0 522.0,426.0 524.0,429.0 525.0,433.0 528.0,424.0 531.0,428.0 533.0,422.0 535.0,427.0 537.0,431.0 540.0,428.0 542.0,433.0 544.0,425.0 546.0,423.0 548.0,427.0 551.0,429.0 552.3,429.3 553.7,420.5 555.0,421.0 557.0,430.0 560.0,428.0 563.0,427.0 566.0,428.0 567.3,429.4 568.7,423.5 570.0,425.0 571.2,426.3 572.5,421.7 573.8,423.1 575.0,421.0 578.0,428.0 581.0,426.0 583.0,432.0 586.0,422.0 588.0,424.0 589.0,433.0 590.0,424.0 591.5,405.0 592.5,414.0 593.0,422.0 595.0,426.0 597.0,423.0 600.0,430.0 603.0,426.0 606.0,430.0 607.3,427.0 608.7,429.0 610.0,424.0 613.0,431.0 615.0,422.0 618.0,420.0 620.0,423.0 622.0,427.0 625.0,421.0 628.0,427.0 630.0,430.0 632.0,424.0 635.0,414.0 637.0,422.0 639.0,430.0 641.0,424.0 644.0,429.0 647.0,423.0 650.0,428.0 652.0,425.0 655.0,410.0 657.0,419.0 658.0,431.0 660.0,426.0 661.3,424.1 662.7,430.5 664.0,428.0 667.0,425.0 670.0,432.0 672.0,436.0 674.0,425.0" fill="none" stroke="#44f844" stroke-width="1" stroke-linejoin="miter" stroke-miterlimit="2" shape-rendering="crispEdges"/>
<text x="348.5" y="301.1" font-size="9.5" fill="#1a8cff" text-anchor="start" textLength="18.00" lengthAdjust="spacingAndGlyphs" xml:space="preserve" stroke="#1a8cff" stroke-width="0.25">000</text>
<text x="348.5" y="317.1" font-size="9.5" fill="#1a8cff" text-anchor="start" textLength="18.00" lengthAdjust="spacingAndGlyphs" xml:space="preserve" stroke="#1a8cff" stroke-width="0.25">-012</text>
<text x="348.5" y="334.1" font-size="9.5" fill="#1a8cff" text-anchor="start" textLength="18.00" lengthAdjust="spacingAndGlyphs" xml:space="preserve" stroke="#1a8cff" stroke-width="0.25">-023</text>
<text x="348.5" y="350.1" font-size="9.5" fill="#1a8cff" text-anchor="start" textLength="18.00" lengthAdjust="spacingAndGlyphs" xml:space="preserve" stroke="#1a8cff" stroke-width="0.25">-035</text>
<text x="348.5" y="366.1" font-size="9.5" fill="#1a8cff" text-anchor="start" textLength="18.00" lengthAdjust="spacingAndGlyphs" xml:space="preserve" stroke="#1a8cff" stroke-width="0.25">-047</text>
<text x="348.5" y="382.1" font-size="9.5" fill="#1a8cff" text-anchor="start" textLength="18.00" lengthAdjust="spacingAndGlyphs" xml:space="preserve" stroke="#1a8cff" stroke-width="0.25">-058</text>
<text x="348.5" y="399.1" font-size="9.5" fill="#1a8cff" text-anchor="start" textLength="18.00" lengthAdjust="spacingAndGlyphs" xml:space="preserve" stroke="#1a8cff" stroke-width="0.25">-070</text>
<text x="348.5" y="415.1" font-size="9.5" fill="#1a8cff" text-anchor="start" textLength="18.00" lengthAdjust="spacingAndGlyphs" xml:space="preserve" stroke="#1a8cff" stroke-width="0.25">-081</text>
<text x="348.5" y="432.1" font-size="9.5" fill="#1a8cff" text-anchor="start" textLength="18.00" lengthAdjust="spacingAndGlyphs" xml:space="preserve" stroke="#1a8cff" stroke-width="0.25">-093</text>
<text x="348.5" y="448.1" font-size="9.5" fill="#1a8cff" text-anchor="start" textLength="18.00" lengthAdjust="spacingAndGlyphs" xml:space="preserve" stroke="#1a8cff" stroke-width="0.25">-105</text>
<text x="348.5" y="464.1" font-size="9.5" fill="#1a8cff" text-anchor="start" textLength="18.00" lengthAdjust="spacingAndGlyphs" xml:space="preserve" stroke="#1a8cff" stroke-width="0.25">-116</text>
<rect x="344" y="297" width="1" height="164" fill="#78c890" />
<rect x="345" y="297" width="1" height="164" fill="#b8f4a8" />
</g>
<rect x="685" y="285" width="7" height="1" fill="#6a6a6a" />
<rect x="722" y="285" width="20" height="1" fill="#6a6a6a" />
<rect x="685" y="285" width="1" height="67" fill="#6a6a6a" />
<rect x="741" y="285" width="1" height="67" fill="#6a6a6a" />
<rect x="685" y="351" width="57" height="1" fill="#6a6a6a" />
<rect x="686" y="286" width="6" height="1" fill="#f4f4f4" />
<rect x="722" y="286" width="19" height="1" fill="#f4f4f4" />
<rect x="686" y="286" width="1" height="65" fill="#f4f4f4" />
<rect x="740" y="286" width="1" height="65" fill="#f4f4f4" />
<rect x="686" y="350" width="55" height="1" fill="#f4f4f4" />
<text x="694" y="290" font-size="11" fill="#33b4b8" text-anchor="start" textLength="21.00" lengthAdjust="spacingAndGlyphs" xml:space="preserve" >Chn1</text>
<rect x="723.5" y="280.5" width="12" height="12" fill="#ffffff" />
<rect x="723.5" y="280.5" width="11" height="1" fill="#a0a0a0" />
<rect x="723.5" y="280.5" width="1" height="11" fill="#a0a0a0" />
<rect x="724.5" y="281.5" width="9" height="1" fill="#696969" />
<rect x="724.5" y="281.5" width="1" height="9" fill="#696969" />
<rect x="724.5" y="290.5" width="10" height="1" fill="#e3e3e3" />
<rect x="733.5" y="281.5" width="1" height="10" fill="#e3e3e3" />
<path d="M726.1 285.5 L728.4 288.3 L733.1 283.3" stroke="#000" stroke-width="2.6" fill="none"/>
<text x="713" y="304" font-size="11" fill="#33b4b8" text-anchor="end" textLength="14.00" lengthAdjust="spacingAndGlyphs" xml:space="preserve" >1,0</text>
<text x="718" y="304" font-size="10" fill="#33b4b8" text-anchor="start" textLength="19.00" lengthAdjust="spacingAndGlyphs" xml:space="preserve" >Gain</text>
<text x="713" y="320" font-size="11" fill="#33b4b8" text-anchor="end" textLength="15.00" lengthAdjust="spacingAndGlyphs" xml:space="preserve" >-58</text>
<text x="718" y="320" font-size="10" fill="#33b4b8" text-anchor="start" textLength="19.00" lengthAdjust="spacingAndGlyphs" xml:space="preserve" >Shift</text>
<text x="713" y="334" font-size="11" fill="#33b4b8" text-anchor="end" textLength="17.00" lengthAdjust="spacingAndGlyphs" xml:space="preserve" >100</text>
<text x="718" y="334" font-size="10" fill="#33b4b8" text-anchor="start" textLength="19.00" lengthAdjust="spacingAndGlyphs" xml:space="preserve" >Brite</text>
<rect x="685" y="356" width="7" height="1" fill="#6a6a6a" />
<rect x="722" y="356" width="20" height="1" fill="#6a6a6a" />
<rect x="685" y="356" width="1" height="68" fill="#6a6a6a" />
<rect x="741" y="356" width="1" height="68" fill="#6a6a6a" />
<rect x="685" y="423" width="57" height="1" fill="#6a6a6a" />
<rect x="686" y="357" width="6" height="1" fill="#f4f4f4" />
<rect x="722" y="357" width="19" height="1" fill="#f4f4f4" />
<rect x="686" y="357" width="1" height="66" fill="#f4f4f4" />
<rect x="740" y="357" width="1" height="66" fill="#f4f4f4" />
<rect x="686" y="422" width="55" height="1" fill="#f4f4f4" />
<text x="694" y="361" font-size="11" fill="#33b4b8" text-anchor="start" textLength="22.00" lengthAdjust="spacingAndGlyphs" xml:space="preserve" >Chn2</text>
<rect x="724.5" y="351.5" width="12" height="12" fill="#ffffff" />
<rect x="724.5" y="351.5" width="11" height="1" fill="#a0a0a0" />
<rect x="724.5" y="351.5" width="1" height="11" fill="#a0a0a0" />
<rect x="725.5" y="352.5" width="9" height="1" fill="#696969" />
<rect x="725.5" y="352.5" width="1" height="9" fill="#696969" />
<rect x="725.5" y="361.5" width="10" height="1" fill="#e3e3e3" />
<rect x="734.5" y="352.5" width="1" height="10" fill="#e3e3e3" />
<text x="713" y="376.5" font-size="11" fill="#33b4b8" text-anchor="end" textLength="14.00" lengthAdjust="spacingAndGlyphs" xml:space="preserve" >0,4</text>
<text x="718" y="376.5" font-size="10" fill="#33b4b8" text-anchor="start" textLength="19.00" lengthAdjust="spacingAndGlyphs" xml:space="preserve" >Gain</text>
<text x="713" y="392" font-size="11" fill="#33b4b8" text-anchor="end" textLength="6.00" lengthAdjust="spacingAndGlyphs" xml:space="preserve" >0</text>
<text x="718" y="392" font-size="10" fill="#33b4b8" text-anchor="start" textLength="19.00" lengthAdjust="spacingAndGlyphs" xml:space="preserve" >Shift</text>
<text x="713" y="406.5" font-size="11" fill="#33b4b8" text-anchor="end" textLength="17.00" lengthAdjust="spacingAndGlyphs" xml:space="preserve" >100</text>
<text x="718" y="406.5" font-size="10" fill="#33b4b8" text-anchor="start" textLength="19.00" lengthAdjust="spacingAndGlyphs" xml:space="preserve" >Brite</text>
<rect x="755" y="285" width="7" height="1" fill="#6a6a6a" />
<rect x="790" y="285" width="38" height="1" fill="#6a6a6a" />
<rect x="755" y="285" width="1" height="86" fill="#6a6a6a" />
<rect x="827" y="285" width="1" height="86" fill="#6a6a6a" />
<rect x="755" y="370" width="73" height="1" fill="#6a6a6a" />
<rect x="756" y="286" width="6" height="1" fill="#f4f4f4" />
<rect x="790" y="286" width="37" height="1" fill="#f4f4f4" />
<rect x="756" y="286" width="1" height="84" fill="#f4f4f4" />
<rect x="826" y="286" width="1" height="84" fill="#f4f4f4" />
<rect x="756" y="369" width="71" height="1" fill="#f4f4f4" />
<text x="764" y="290" font-size="11" fill="#33b4b8" text-anchor="start" textLength="24.50" lengthAdjust="spacingAndGlyphs" xml:space="preserve" >Scope</text>
<rect x="811" y="280.5" width="12" height="12" fill="#ffffff" />
<rect x="811" y="280.5" width="11" height="1" fill="#a0a0a0" />
<rect x="811" y="280.5" width="1" height="11" fill="#a0a0a0" />
<rect x="812" y="281.5" width="9" height="1" fill="#696969" />
<rect x="812" y="281.5" width="1" height="9" fill="#696969" />
<rect x="812" y="290.5" width="10" height="1" fill="#e3e3e3" />
<rect x="821" y="281.5" width="1" height="10" fill="#e3e3e3" />
<path d="M813.6 285.5 L815.9 288.3 L820.6 283.3" stroke="#000" stroke-width="2.6" fill="none"/>
<rect x="760.5" y="296" width="12" height="12" fill="#ffffff" />
<rect x="760.5" y="296" width="11" height="1" fill="#a0a0a0" />
<rect x="760.5" y="296" width="1" height="11" fill="#a0a0a0" />
<rect x="761.5" y="297" width="9" height="1" fill="#696969" />
<rect x="761.5" y="297" width="1" height="9" fill="#696969" />
<rect x="761.5" y="306" width="10" height="1" fill="#e3e3e3" />
<rect x="770.5" y="297" width="1" height="10" fill="#e3e3e3" />
<path d="M763.1 301 L765.4 303.8 L770.1 298.8" stroke="#000" stroke-width="2.6" fill="none"/>
<text x="778" y="306" font-size="10" fill="#33b4b8" text-anchor="start" textLength="18.50" lengthAdjust="spacingAndGlyphs" xml:space="preserve" >Freq</text>
<rect x="760.5" y="316" width="12" height="12" fill="#ffffff" />
<rect x="760.5" y="316" width="11" height="1" fill="#a0a0a0" />
<rect x="760.5" y="316" width="1" height="11" fill="#a0a0a0" />
<rect x="761.5" y="317" width="9" height="1" fill="#696969" />
<rect x="761.5" y="317" width="1" height="9" fill="#696969" />
<rect x="761.5" y="326" width="10" height="1" fill="#e3e3e3" />
<rect x="770.5" y="317" width="1" height="10" fill="#e3e3e3" />
<text x="778" y="326" font-size="10" fill="#33b4b8" text-anchor="start" textLength="19.00" lengthAdjust="spacingAndGlyphs" xml:space="preserve" >Time</text>
<rect x="760.5" y="336" width="12" height="12" fill="#ffffff" />
<rect x="760.5" y="336" width="11" height="1" fill="#a0a0a0" />
<rect x="760.5" y="336" width="1" height="11" fill="#a0a0a0" />
<rect x="761.5" y="337" width="9" height="1" fill="#696969" />
<rect x="761.5" y="337" width="1" height="9" fill="#696969" />
<rect x="761.5" y="346" width="10" height="1" fill="#e3e3e3" />
<rect x="770.5" y="337" width="1" height="10" fill="#e3e3e3" />
<text x="778" y="346" font-size="10" fill="#33b4b8" text-anchor="start" textLength="24.00" lengthAdjust="spacingAndGlyphs" xml:space="preserve" >Phase</text>
<rect x="760.5" y="355" width="12" height="12" fill="#ffffff" />
<rect x="760.5" y="355" width="11" height="1" fill="#a0a0a0" />
<rect x="760.5" y="355" width="1" height="11" fill="#a0a0a0" />
<rect x="761.5" y="356" width="9" height="1" fill="#696969" />
<rect x="761.5" y="356" width="1" height="9" fill="#696969" />
<rect x="761.5" y="365" width="10" height="1" fill="#e3e3e3" />
<rect x="770.5" y="356" width="1" height="10" fill="#e3e3e3" />
<path d="M763.1 360 L765.4 362.8 L770.1 357.8" stroke="#000" stroke-width="2.6" fill="none"/>
<text x="778" y="365" font-size="10" fill="#33b4b8" text-anchor="start" textLength="41.00" lengthAdjust="spacingAndGlyphs" xml:space="preserve" >Show Fltr</text>
<rect x="755" y="378" width="7" height="1" fill="#6a6a6a" />
<rect x="795" y="378" width="33" height="1" fill="#6a6a6a" />
<rect x="755" y="378" width="1" height="46" fill="#6a6a6a" />
<rect x="827" y="378" width="1" height="46" fill="#6a6a6a" />
<rect x="755" y="423" width="73" height="1" fill="#6a6a6a" />
<rect x="756" y="379" width="6" height="1" fill="#f4f4f4" />
<rect x="795" y="379" width="32" height="1" fill="#f4f4f4" />
<rect x="756" y="379" width="1" height="44" fill="#f4f4f4" />
<rect x="826" y="379" width="1" height="44" fill="#f4f4f4" />
<rect x="756" y="422" width="71" height="1" fill="#f4f4f4" />
<text x="764" y="382.5" font-size="11" fill="#33b4b8" text-anchor="start" textLength="28.00" lengthAdjust="spacingAndGlyphs" xml:space="preserve" >Sweep</text>
<text x="758" y="396" font-size="11" fill="#33b4b8" text-anchor="start" textLength="26.00" lengthAdjust="spacingAndGlyphs" xml:space="preserve" >2.000</text>
<text x="823.5" y="396" font-size="10" fill="#33b4b8" text-anchor="end" textLength="29.00" lengthAdjust="spacingAndGlyphs" xml:space="preserve" >Hz/Div</text>
<text x="758" y="414.5" font-size="11" fill="#33b4b8" text-anchor="start" textLength="48.00" lengthAdjust="spacingAndGlyphs" xml:space="preserve" >7.330.000</text>
<text x="823.5" y="414.5" font-size="10" fill="#33b4b8" text-anchor="end" textLength="11.00" lengthAdjust="spacingAndGlyphs" xml:space="preserve" >Hz</text>
<rect x="685" y="430" width="7" height="1" fill="#6a6a6a" />
<rect x="728" y="430" width="101" height="1" fill="#6a6a6a" />
<rect x="685" y="430" width="1" height="28" fill="#6a6a6a" />
<rect x="828" y="430" width="1" height="28" fill="#6a6a6a" />
<rect x="685" y="457" width="144" height="1" fill="#6a6a6a" />
<rect x="686" y="431" width="6" height="1" fill="#f4f4f4" />
<rect x="728" y="431" width="100" height="1" fill="#f4f4f4" />
<rect x="686" y="431" width="1" height="26" fill="#f4f4f4" />
<rect x="827" y="431" width="1" height="26" fill="#f4f4f4" />
<rect x="686" y="456" width="142" height="1" fill="#f4f4f4" />
<text x="694" y="435.5" font-size="11" fill="#33b4b8" text-anchor="start" textLength="31.50" lengthAdjust="spacingAndGlyphs" xml:space="preserve" >Y Mode</text>
<rect x="693.5" y="441" width="12" height="12" fill="#ffffff" />
<rect x="693.5" y="441" width="11" height="1" fill="#a0a0a0" />
<rect x="693.5" y="441" width="1" height="11" fill="#a0a0a0" />
<rect x="694.5" y="442" width="9" height="1" fill="#696969" />
<rect x="694.5" y="442" width="1" height="9" fill="#696969" />
<rect x="694.5" y="451" width="10" height="1" fill="#e3e3e3" />
<rect x="703.5" y="442" width="1" height="10" fill="#e3e3e3" />
<text x="710" y="451" font-size="10" fill="#33b4b8" text-anchor="start" textLength="13.00" lengthAdjust="spacingAndGlyphs" xml:space="preserve" >Lin</text>
<rect x="741.5" y="441" width="12" height="12" fill="#ffffff" />
<rect x="741.5" y="441" width="11" height="1" fill="#a0a0a0" />
<rect x="741.5" y="441" width="1" height="11" fill="#a0a0a0" />
<rect x="742.5" y="442" width="9" height="1" fill="#696969" />
<rect x="742.5" y="442" width="1" height="9" fill="#696969" />
<rect x="742.5" y="451" width="10" height="1" fill="#e3e3e3" />
<rect x="751.5" y="442" width="1" height="10" fill="#e3e3e3" />
<text x="758.5" y="451" font-size="10" fill="#33b4b8" text-anchor="start" textLength="18.50" lengthAdjust="spacingAndGlyphs" xml:space="preserve" >Fast</text>
<text x="793.5" y="451" font-size="11" fill="#33b4b8" text-anchor="start" textLength="6.00" lengthAdjust="spacingAndGlyphs" xml:space="preserve" >8</text>
<text x="808" y="451" font-size="11" fill="#33b4b8" text-anchor="start" textLength="12.00" lengthAdjust="spacingAndGlyphs" xml:space="preserve" >23</text>
<rect x="12" y="473" width="822" height="2" fill="#8c8c8c" />
<rect x="12" y="473" width="2" height="29" fill="#8c8c8c" />
<rect x="12" y="500" width="822" height="2" fill="#ffffff" />
<rect x="832" y="473" width="2" height="29" fill="#ffffff" />
<text x="22.5" y="489" font-size="10" fill="#33b4b8" text-anchor="start" textLength="93.50" lengthAdjust="spacingAndGlyphs" xml:space="preserve" >Peak In 32,767  -15dB</text>
<text x="140" y="489" font-size="10" fill="#33b4b8" text-anchor="start" textLength="101.50" lengthAdjust="spacingAndGlyphs" xml:space="preserve" >Peak Out 32,767  -55dB</text>
<text x="262.5" y="489" font-size="10" fill="#33b4b8" text-anchor="start" textLength="115.00" lengthAdjust="spacingAndGlyphs" xml:space="preserve" >AGC Level500.05  -11.0 dB</text>
<text x="394.5" y="489" font-size="10" fill="#33b4b8" text-anchor="start" textLength="130.00" lengthAdjust="spacingAndGlyphs" xml:space="preserve" >DSP Window  23 % 12,345 uS</text>
<text x="538.5" y="489" font-size="10" fill="#33b4b8" text-anchor="start" textLength="12.50" lengthAdjust="spacingAndGlyphs" xml:space="preserve" >LO</text>
<text x="573" y="489" font-size="10" fill="#33b4b8" text-anchor="start" textLength="54.50" lengthAdjust="spacingAndGlyphs" xml:space="preserve" >7 330 000 Hz</text>
<rect x="646.5" y="479" width="12" height="12" fill="#ffffff" />
<rect x="646.5" y="479" width="11" height="1" fill="#a0a0a0" />
<rect x="646.5" y="479" width="1" height="11" fill="#a0a0a0" />
<rect x="647.5" y="480" width="9" height="1" fill="#696969" />
<rect x="647.5" y="480" width="1" height="9" fill="#696969" />
<rect x="647.5" y="489" width="10" height="1" fill="#e3e3e3" />
<rect x="656.5" y="480" width="1" height="10" fill="#e3e3e3" />
<path d="M649.1 484 L651.4 486.8 L656.1 481.8" stroke="#000" stroke-width="2.6" fill="none"/>
<text x="663" y="489" font-size="10" fill="#33b4b8" text-anchor="start" textLength="27.50" lengthAdjust="spacingAndGlyphs" xml:space="preserve" >L&lt;-&gt;R</text>
<rect x="701" y="479" width="13" height="14" fill="#6a6a6a" />
<rect x="701" y="479" width="12" height="13" fill="#ffffff" />
<rect x="702" y="480" width="11" height="12" fill="#a8a8a8" />
<rect x="702" y="480" width="10" height="11" fill="#efefef" />
<text x="707.5" y="490" font-size="11" fill="#000" text-anchor="middle" textLength="7.00" lengthAdjust="spacingAndGlyphs" xml:space="preserve" >E</text>
<rect x="721" y="480" width="37" height="14" fill="#6a6a6a" />
<rect x="721" y="480" width="36" height="13" fill="#ffffff" />
<rect x="722" y="481" width="35" height="12" fill="#a8a8a8" />
<rect x="722" y="481" width="34" height="11" fill="#efefef" />
<text x="739.5" y="490.5" font-size="10" fill="#000" text-anchor="middle" textLength="28.00" lengthAdjust="spacingAndGlyphs" xml:space="preserve" >Config</text>
<rect x="761" y="480" width="37" height="14" fill="#6a6a6a" />
<rect x="761" y="480" width="36" height="13" fill="#ffffff" />
<rect x="762" y="481" width="35" height="12" fill="#a8a8a8" />
<rect x="762" y="481" width="34" height="11" fill="#efefef" />
<text x="779.5" y="490.5" font-size="10" fill="#000" text-anchor="middle" textLength="27.00" lengthAdjust="spacingAndGlyphs" xml:space="preserve" >ZeroS</text>
<rect x="801.5" y="479.5" width="13" height="13" fill="#ffffff" />
<rect x="801.5" y="479.5" width="12" height="1" fill="#a0a0a0" />
<rect x="801.5" y="479.5" width="1" height="12" fill="#a0a0a0" />
<rect x="802.5" y="480.5" width="10" height="1" fill="#696969" />
<rect x="802.5" y="480.5" width="1" height="10" fill="#696969" />
<rect x="802.5" y="490.5" width="11" height="1" fill="#e3e3e3" />
<rect x="812.5" y="480.5" width="1" height="11" fill="#e3e3e3" />
<text x="818.5" y="490" font-size="10" fill="#33b4b8" text-anchor="start" textLength="12.50" lengthAdjust="spacingAndGlyphs" xml:space="preserve" >On</text>
</svg></body></html>
